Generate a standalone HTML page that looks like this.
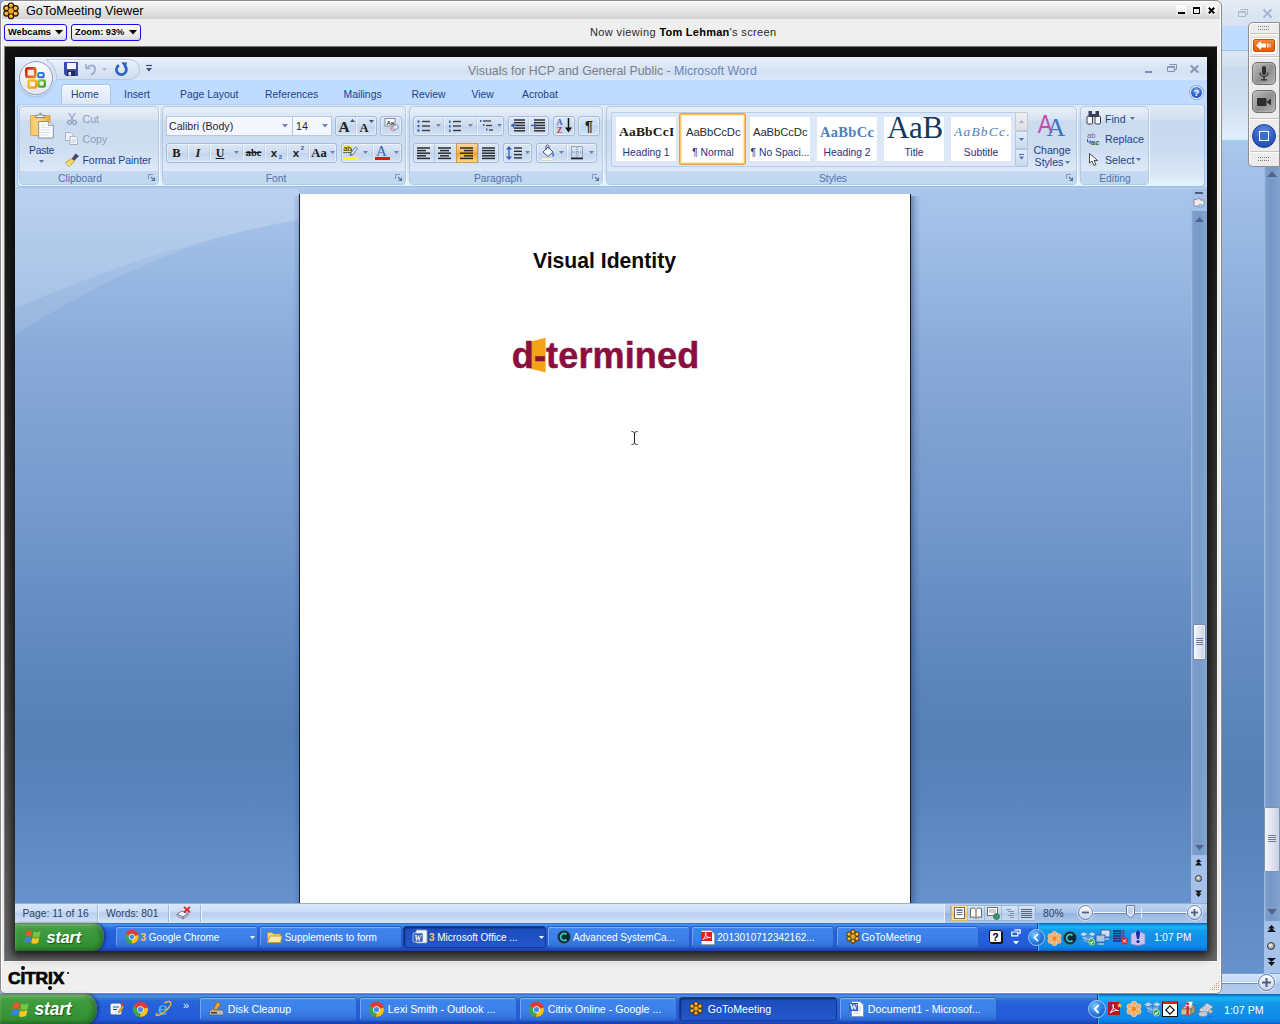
<!DOCTYPE html>
<html lang="en"><head><meta charset="utf-8"><title>GoToMeeting Viewer</title>
<style>
*{box-sizing:border-box;margin:0;padding:0}
html,body{width:1280px;height:1024px;overflow:hidden}
body{position:relative;background:#8eb0dc;font-family:"Liberation Sans",sans-serif;font-size:10.3px;color:#15428b}
div,svg,span.a{position:absolute}
svg{overflow:visible}
.t{white-space:nowrap;overflow:visible}
.sf{font-family:"Liberation Serif",serif}
.dj{font-family:"DejaVu Sans",sans-serif}
</style></head><body>
<div style="left:1200px;top:0px;width:80px;height:26px;background:linear-gradient(#e6edf7,#dbe5f2 60%,#d6e2f1)"></div><div style="left:1200px;top:26px;width:80px;height:25px;background:#bfdbff;border-bottom:1px solid #9fc0ea"></div><div style="left:1200px;top:51px;width:80px;height:90px;background:linear-gradient(#dbe6f4 0,#d0deef 16px,#c8d9ed 17px,#cfdff1 55px,#e1eefb 86px,#d4f6fb 88px,#a9c4e6 90px)"></div><div style="left:1200px;top:141px;width:80px;height:833px;background:linear-gradient(#a9c6ec 0%,#9bbae4 10%,#88a9d8 24%,#7196ca 49%,#6089c0 64%,#5680b6 76%,#5984bc 85%,#6892cc 100%)"></div><div style="left:1264px;top:141px;width:16px;height:780px;background:linear-gradient(90deg,#a9c4ea 0,#7c9dca 2px,#7797c6 8px,#84a4cf 16px)"></div><svg style="left:1267px;top:171px;" width="10" height="6" viewBox="0 0 10 6" preserveAspectRatio="none"><path d="M0 6 L5 0 L10 6Z" fill="#53658a"/></svg><div style="left:1264px;top:807px;width:16px;height:65px;background:linear-gradient(90deg,#f4f6fa,#dfe4ee 50%,#c9d2e3);border:1px solid #7f93b5;border-radius:2px"></div><svg style="left:1268px;top:835px;" width="8" height="8" viewBox="0 0 8 8" preserveAspectRatio="none"><path d="M0 .5H8M0 2.5H8M0 4.5H8M0 6.5H8" stroke="#6d7c96" stroke-width="1"/></svg><svg style="left:1267px;top:909px;" width="10" height="6" viewBox="0 0 10 6" preserveAspectRatio="none"><path d="M0 0 L5 6 L10 0Z" fill="#53658a"/></svg><div style="left:1264px;top:921px;width:16px;height:53px;background:#a5c2ea"></div><svg style="left:1267px;top:925px;" width="9" height="8" viewBox="0 0 9 8" preserveAspectRatio="none"><path d="M4.5 0 L8 3.5H1Z M4.5 3 L9 7H0Z" fill="#111"/></svg><div style="left:1267px;top:942px;width:8px;height:8px;border-radius:50%;background:radial-gradient(circle at 40% 35%,#f4f4f4,#9a9a9a 70%,#444);border:1px solid #333"></div><svg style="left:1267px;top:958px;" width="9" height="8" viewBox="0 0 9 8" preserveAspectRatio="none"><path d="M0 0H9L4.5 4Z M1 4H8L4.5 8Z" fill="#111"/></svg><div style="left:1200px;top:973px;width:80px;height:21px;background:linear-gradient(#d3e3f9 0,#c1d8f6 35%,#a9c6ee 50%,#b6cfee 100%);border-top:1px solid #7d9fd0"></div><div style="left:1222px;top:982px;width:40px;height:1px;background:#f4f8fd"></div><div style="left:1222px;top:983px;width:40px;height:1px;background:#6e8dbd"></div><div style="left:1258px;top:974px;width:17px;height:17px;border-radius:50%;background:linear-gradient(#fdfeff,#c9d6ea);border:1px solid #61799f;box-shadow:0 0 0 1px rgba(255,255,255,.6)"></div><svg style="left:1262px;top:978px;" width="9" height="9" viewBox="0 0 9 9" preserveAspectRatio="none"><path d="M4.5 0V9M0 4.5H9" stroke="#4c5f82" stroke-width="2"/></svg><svg style="left:1238px;top:9px;" width="10" height="8" viewBox="0 0 10 8" preserveAspectRatio="none"><path d="M2.5 .5H9.5V5.5H7.5M.5 2.5H7.5V7.5H.5Z" fill="none" stroke="#a9b9d0" stroke-width="1"/><path d="M.5 3H7.5" stroke="#a9b9d0" stroke-width="1.6"/></svg><svg style="left:1263px;top:9px;" width="9" height="9" viewBox="0 0 9 9" preserveAspectRatio="none"><path d="M.5 .5L8.5 8.5M8.5 .5L.5 8.5" stroke="#a5b6cf" stroke-width="2"/></svg><div style="left:1248px;top:22px;width:32px;height:145px;background:#ececec;border:1px solid #8e8e8e;border-radius:5px 0 0 5px;box-shadow:inset 1px 1px 0 #fafafa"></div><svg style="left:1258px;top:26px;" width="12" height="5" viewBox="0 0 12 5" preserveAspectRatio="none"><rect x="0" y="0" width="1" height="1" fill="#777"/><rect x="0" y="3" width="1" height="1" fill="#777"/><rect x="2" y="0" width="1" height="1" fill="#777"/><rect x="2" y="3" width="1" height="1" fill="#777"/><rect x="4" y="0" width="1" height="1" fill="#777"/><rect x="4" y="3" width="1" height="1" fill="#777"/><rect x="6" y="0" width="1" height="1" fill="#777"/><rect x="6" y="3" width="1" height="1" fill="#777"/><rect x="8" y="0" width="1" height="1" fill="#777"/><rect x="8" y="3" width="1" height="1" fill="#777"/><rect x="10" y="0" width="1" height="1" fill="#777"/><rect x="10" y="3" width="1" height="1" fill="#777"/></svg><svg style="left:1258px;top:157px;" width="12" height="5" viewBox="0 0 12 5" preserveAspectRatio="none"><rect x="0" y="0" width="1" height="1" fill="#777"/><rect x="0" y="3" width="1" height="1" fill="#777"/><rect x="2" y="0" width="1" height="1" fill="#777"/><rect x="2" y="3" width="1" height="1" fill="#777"/><rect x="4" y="0" width="1" height="1" fill="#777"/><rect x="4" y="3" width="1" height="1" fill="#777"/><rect x="6" y="0" width="1" height="1" fill="#777"/><rect x="6" y="3" width="1" height="1" fill="#777"/><rect x="8" y="0" width="1" height="1" fill="#777"/><rect x="8" y="3" width="1" height="1" fill="#777"/><rect x="10" y="0" width="1" height="1" fill="#777"/><rect x="10" y="3" width="1" height="1" fill="#777"/></svg><div style="left:1250px;top:33px;width:29px;height:1px;background:#c4c4c4"></div><div style="left:1250px;top:34px;width:29px;height:1px;background:#fbfbfb"></div><div style="left:1251px;top:37px;width:27px;height:18px;background:#fff;border-radius:3px;border:1px solid #d9d9d9"></div><div style="left:1253px;top:39px;width:22px;height:13px;background:linear-gradient(#f7893a,#ee6a10 50%,#e35e05);border:1px solid #c9510a;border-radius:2px"></div><svg style="left:1256px;top:41px;" width="16" height="9" viewBox="0 0 16 9" preserveAspectRatio="none"><path d="M0 4.5 L5 0 V2.5 H10 V6.5 H5 V9Z" fill="#fff"/><rect x="11" y="2.5" width="1.5" height="4" fill="#fff"/><rect x="13.5" y="2.5" width="1.2" height="4" fill="#ffd9bd"/></svg><div style="left:1250px;top:56px;width:29px;height:1px;background:#c4c4c4"></div><div style="left:1250px;top:57px;width:29px;height:1px;background:#fbfbfb"></div><div style="left:1252px;top:62px;width:24px;height:23px;background:linear-gradient(135deg,#bdbdbd,#8f8f8f 55%,#b2b2b2);border:1px solid #6f6f6f;border-radius:5px;box-shadow:inset 0 0 2px rgba(255,255,255,.6)"></div><svg style="left:1259px;top:66px;" width="10" height="15" viewBox="0 0 10 15" preserveAspectRatio="none"><rect x="3" y="0" width="4" height="9" rx="2" fill="#2e2e2e"/><path d="M1 6.5 a4 4 0 0 0 8 0" fill="none" stroke="#2e2e2e" stroke-width="1.2"/><path d="M5 10.5V13.5M2 13.8H8" stroke="#2e2e2e" stroke-width="1.3"/></svg><div style="left:1252px;top:90px;width:24px;height:23px;background:linear-gradient(135deg,#bdbdbd,#8f8f8f 55%,#b2b2b2);border:1px solid #6f6f6f;border-radius:5px;box-shadow:inset 0 0 2px rgba(255,255,255,.6)"></div><svg style="left:1257px;top:98px;" width="14" height="8" viewBox="0 0 14 8" preserveAspectRatio="none"><rect x="0" y="0" width="9.5" height="8" rx="1" fill="#2e2e2e"/><path d="M9.5 4 L14 .5 V7.5Z" fill="#2e2e2e"/></svg><div style="left:1250px;top:118px;width:29px;height:1px;background:#c4c4c4"></div><div style="left:1250px;top:119px;width:29px;height:1px;background:#fbfbfb"></div><div style="left:1252px;top:124px;width:24px;height:24px;border-radius:50%;background:radial-gradient(circle at 50% 25%,#5d8ae0,#2f5fc4 55%,#1d45a0);border:1px solid #1b3f94"></div><div style="left:1259px;top:131px;width:10px;height:10px;border:1.5px solid #fff;background:#3c6ed0"></div><div style="left:1250px;top:151px;width:29px;height:1px;background:#c4c4c4"></div><div style="left:1250px;top:152px;width:29px;height:1px;background:#fbfbfb"></div><div style="left:0px;top:0px;width:1222px;height:994px;background:#efefef;border:1px solid #8c8c8c;border-radius:5px 6px 6px 5px;box-shadow:inset 1px 1px 0 #fff, inset -1px -1px 0 #fff"></div><div style="left:2px;top:2px;width:1218px;height:17px;background:linear-gradient(#f6f6f6,#e6e6e6 45%,#d4d4d4);border-radius:3px 4px 0 0"></div><div class="t" style="left:26px;top:0.5px;height:20px;line-height:20px;font-size:12.7px;color:#000;">GoToMeeting Viewer</div><svg width="0" height="0" style="left:0;top:0"><defs><radialGradient id="dg" cx="45%" cy="35%" r="70%"><stop offset="0" stop-color="#ffd24a"/><stop offset="1" stop-color="#f08a00"/></radialGradient><radialGradient id="dg2" cx="50%" cy="50%" r="60%"><stop offset="0" stop-color="#ffc58a"/><stop offset="1" stop-color="#f07c12"/></radialGradient></defs></svg><svg style="left:2px;top:2px;" width="18" height="18" viewBox="0 0 18 18" preserveAspectRatio="none"><circle cx="9.00" cy="3.60" r="2.6" fill="url(#dg)" stroke="#1a1200" stroke-width="1.1"/><circle cx="4.41" cy="6.25" r="2.6" fill="url(#dg)" stroke="#1a1200" stroke-width="1.1"/><circle cx="4.41" cy="11.55" r="2.6" fill="url(#dg)" stroke="#1a1200" stroke-width="1.1"/><circle cx="9.00" cy="14.20" r="2.6" fill="url(#dg)" stroke="#1a1200" stroke-width="1.1"/><circle cx="13.59" cy="11.55" r="2.6" fill="url(#dg)" stroke="#1a1200" stroke-width="1.1"/><circle cx="13.59" cy="6.25" r="2.6" fill="url(#dg)" stroke="#1a1200" stroke-width="1.1"/><circle cx="9" cy="8.9" r="2.6" fill="#f9a11c"/></svg><div style="left:1176px;top:5px;width:11px;height:11px;background:linear-gradient(#ffffff,#f1f1f1 60%,#dedede);border-radius:2px;box-shadow:0 0 1px #cfcfcf"></div><div style="left:1178px;top:12px;width:7px;height:2px;background:#000"></div><div style="left:1191px;top:5px;width:11px;height:11px;background:linear-gradient(#ffffff,#f1f1f1 60%,#dedede);border-radius:2px;box-shadow:0 0 1px #cfcfcf"></div><div style="left:1193px;top:7px;width:7px;height:7px;border:1px solid #000;border-top-width:2px;background:#eee"></div><div style="left:1206px;top:5px;width:11px;height:11px;background:linear-gradient(#ffffff,#f1f1f1 60%,#dedede);border-radius:2px;box-shadow:0 0 1px #cfcfcf"></div><svg style="left:1208px;top:7px;" width="7" height="7" viewBox="0 0 7 7" preserveAspectRatio="none"><path d="M.8 .8L6.2 6.2M6.2 .8L.8 6.2" stroke="#000" stroke-width="2"/></svg><div style="left:4px;top:24px;width:63px;height:16.5px;background:linear-gradient(#ffffff,#f4f4f4 45%,#d9d9d9);border:1px solid #1010e8;border-radius:3px"></div><div class="t" style="left:8px;top:21.7px;height:20px;line-height:20px;font-size:9.25px;color:#000;font-weight:bold">Webcams</div><svg style="left:55px;top:30px;" width="8" height="5" viewBox="0 0 8 5" preserveAspectRatio="none"><path d="M0 0H8L4 4.5Z" fill="#000"/></svg><div style="left:71px;top:24px;width:70px;height:16.5px;background:linear-gradient(#ffffff,#f4f4f4 45%,#d9d9d9);border:1px solid #1010e8;border-radius:3px"></div><div class="t" style="left:75px;top:21.7px;height:20px;line-height:20px;font-size:9.25px;color:#000;font-weight:bold">Zoom: 93%</div><svg style="left:129px;top:30px;" width="8" height="5" viewBox="0 0 8 5" preserveAspectRatio="none"><path d="M0 0H8L4 4.5Z" fill="#000"/></svg><div class="t" style="left:590px;top:22.0px;height:20px;line-height:20px;font-size:11px;color:#2a2a2a;letter-spacing:.38px">Now viewing <span style="color:#000;font-weight:bold;letter-spacing:.25px">Tom Lehman</span>'s screen</div><div style="left:4px;top:46px;width:1214px;height:916px;background:linear-gradient(#131313,#1b1b1b 20%,#444 70%,#696969 100%);border-top:1px solid #7a7a7a;border-left:1px solid #858585;border-right:1px solid #fff;border-bottom:1px solid #fff"></div><div style="left:15px;top:57px;width:1192px;height:894px;background:#5a84bb;box-shadow:0 2px 9px 3px rgba(0,0,0,.75)"></div><div class="t" style="left:8px;top:965.6px;height:24px;line-height:24px;font-size:17.4px;color:#000;font-weight:bold;letter-spacing:-.15px;-webkit-text-stroke:.7px #000">CITRIX</div><div style="left:21px;top:966px;width:4px;height:4px;background:#000;border-radius:50%"></div><div style="left:47.5px;top:985.5px;width:4px;height:4px;background:#000;border-radius:50%"></div><div style="left:67px;top:972px;width:2px;height:2px;background:#000;border-radius:50%"></div><svg style="left:1208px;top:979px;" width="12" height="12" viewBox="0 0 12 12" preserveAspectRatio="none"><rect x="10" y="2" width="1" height="1" fill="#c8a468"/><rect x="10" y="4" width="1" height="1" fill="#c8a468"/><rect x="8" y="4" width="1" height="1" fill="#c8a468"/><rect x="10" y="6" width="1" height="1" fill="#c8a468"/><rect x="8" y="6" width="1" height="1" fill="#c8a468"/><rect x="6" y="6" width="1" height="1" fill="#c8a468"/><rect x="10" y="8" width="1" height="1" fill="#c8a468"/><rect x="8" y="8" width="1" height="1" fill="#c8a468"/><rect x="6" y="8" width="1" height="1" fill="#c8a468"/><rect x="4" y="8" width="1" height="1" fill="#c8a468"/><rect x="10" y="10" width="1" height="1" fill="#c8a468"/><rect x="8" y="10" width="1" height="1" fill="#c8a468"/><rect x="6" y="10" width="1" height="1" fill="#c8a468"/><rect x="4" y="10" width="1" height="1" fill="#c8a468"/><rect x="2" y="10" width="1" height="1" fill="#c8a468"/></svg><div style="left:15px;top:57px;width:1192px;height:23px;background:linear-gradient(#e9f0fa 0,#dfe9f6 30%,#d3e1f4 65%,#dbe8f8 100%)"></div><div style="left:15px;top:80px;width:1192px;height:25px;background:#bfdbff"></div><svg style="left:40px;top:57px;" width="104" height="26" viewBox="0 0 104 26" preserveAspectRatio="none"><defs><linearGradient id="qg" x1="0" y1="0" x2="0" y2="1"><stop offset="0" stop-color="#e9f0fa"/><stop offset="1" stop-color="#cfddf0"/></linearGradient></defs><path d="M6.100 2.500H89.500A10 10 0 0 1 89.500 22.500H16.700A21 21 0 0 0 6.100 2.500Z" fill="url(#qg)" stroke="#b5c8e4" stroke-width="1"/><path d="M8 3.500H89" stroke="#f6f9fd" stroke-width="1"/></svg><div style="left:18.5px;top:60.5px;width:34.5px;height:34.5px;border-radius:50%;background:radial-gradient(circle at 50% 35%,#ffffff 0,#f4f6fa 40%,#dfe4ee 75%,#c3cbdb 100%);border:1px solid #939fb8;box-shadow:0 0 0 1px rgba(255,255,255,.55),0 1px 3px rgba(70,90,130,.5), inset 0 0 3px #fff"></div><svg style="left:24px;top:66px;" width="24" height="24" viewBox="0 0 24 24" preserveAspectRatio="none"><defs><linearGradient id="o1" x1="0" y1="0" x2="1" y2="1"><stop offset="0" stop-color="#c8201a"/><stop offset="1" stop-color="#ee8a22"/></linearGradient><linearGradient id="o2" x1="0" y1="0" x2="1" y2="1"><stop offset="0" stop-color="#2a8fd8"/><stop offset="1" stop-color="#3c5cc0"/></linearGradient><linearGradient id="o3" x1="0" y1="0" x2="1" y2="1"><stop offset="0" stop-color="#f6c62a"/><stop offset="1" stop-color="#f09a18"/></linearGradient><linearGradient id="o4" x1="0" y1="0" x2="1" y2="1"><stop offset="0" stop-color="#8cc63e"/><stop offset="1" stop-color="#3f9a2e"/></linearGradient></defs><rect x="2.300" y="2.300" width="9" height="8.600" rx="1.500" fill="#f6ece6" stroke="url(#o1)" stroke-width="2.700"/><rect x="14.200" y="7" width="5.500" height="4.300" rx="1" fill="#dbeaf8" stroke="url(#o2)" stroke-width="2"/><rect x="4.500" y="14.600" width="7.600" height="7" rx="1.300" fill="#fbf6e0" stroke="url(#o3)" stroke-width="2.500"/><rect x="14.500" y="14.300" width="6.300" height="6.300" rx="1.200" fill="#e9f4dc" stroke="url(#o4)" stroke-width="2.300"/></svg><svg style="left:64px;top:62px;" width="14" height="14" viewBox="0 0 14 14" preserveAspectRatio="none"><path d="M0 0H14V14H2L0 12Z" fill="#3c4aa8"/><rect x="3" y="1" width="9" height="6" fill="#f2f4fb"/><rect x="3" y="9" width="8" height="5" fill="#20285e"/><rect x="4.5" y="10" width="2.5" height="3.5" fill="#e8ebf7"/></svg><svg style="left:85px;top:63px;" width="12" height="12" viewBox="0 0 12 12" preserveAspectRatio="none"><path d="M1 1V5.5H5.5" fill="none" stroke="#9fb1d0" stroke-width="1.6"/><path d="M2 5 C5 1,10 2,10 6 C10 9,8 11,6 11.5" fill="none" stroke="#9fb1d0" stroke-width="2"/></svg><svg style="left:102px;top:68px;" width="5" height="3" viewBox="0 0 5 3" preserveAspectRatio="none"><path d="M0 0H5L2.5 3Z" fill="#a9badb"/></svg><svg style="left:115px;top:62px;" width="13" height="14" viewBox="0 0 13 14" preserveAspectRatio="none"><path d="M4 3.2 A5 5 0 1 0 9.4 3.6" fill="none" stroke="#2f62c2" stroke-width="2.7"/><path d="M6.2 .2 L12.2 .6 L10.6 6.2Z" fill="#2f62c2"/></svg><svg style="left:146px;top:65px;" width="6" height="8" viewBox="0 0 6 8" preserveAspectRatio="none"><path d="M0 .5H6" stroke="#3c4f77" stroke-width="1.2"/><path d="M0 3H6L3 6.5Z" fill="#3c4f77"/></svg><div class="t" style="left:468px;top:60.8px;height:20px;line-height:20px;font-size:12.35px;color:#7c7f86;">Visuals for HCP and General Public - <span style="color:#6b86ba">Microsoft Word</span></div><div style="left:1145px;top:71px;width:7px;height:2px;background:#7f8fae"></div><svg style="left:1167px;top:64px;" width="10" height="8" viewBox="0 0 10 8" preserveAspectRatio="none"><path d="M2.5 .5H9.5V5.5H7.5M.5 2.5H7.5V7.5H.5Z" fill="none" stroke="#8392b0" stroke-width="1"/><path d="M.5 3H7.5" stroke="#8392b0" stroke-width="1.6"/></svg><svg style="left:1190px;top:65px;" width="9" height="8" viewBox="0 0 9 8" preserveAspectRatio="none"><path d="M.7 .5L8.3 7.5M8.3 .5L.7 7.5" stroke="#8795b3" stroke-width="2"/></svg><div style="left:1190px;top:86px;width:13px;height:13px;border-radius:50%;background:radial-gradient(circle at 50% 30%,#7aa7ef,#2b5fcc 60%,#1c48ad);border:1px solid #eef4fe;box-shadow:0 0 0 1px #8fa9d6"></div><div class="t" style="left:1046.5px;width:300px;text-align:center;top:82.8px;height:20px;line-height:20px;font-size:9.5px;color:#fff;font-weight:bold">?</div><div style="left:61px;top:84px;width:50px;height:22px;background:linear-gradient(#f2f7fe,#e3ecf8 60%,#dbe6f4);border:1px solid #a9c3e6;border-bottom:none;border-radius:4px 4px 0 0;box-shadow:inset 0 1px 0 #fff"></div><div class="t" style="left:71px;top:84.5px;height:20px;line-height:20px;font-size:10.4px;color:#21438a;">Home</div><div class="t" style="left:124px;top:84.5px;height:20px;line-height:20px;font-size:10.4px;color:#21438a;">Insert</div><div class="t" style="left:180px;top:84.5px;height:20px;line-height:20px;font-size:10.4px;color:#21438a;">Page Layout</div><div class="t" style="left:265px;top:84.5px;height:20px;line-height:20px;font-size:10.4px;color:#21438a;">References</div><div class="t" style="left:343.5px;top:84.5px;height:20px;line-height:20px;font-size:10.4px;color:#21438a;">Mailings</div><div class="t" style="left:411.5px;top:84.5px;height:20px;line-height:20px;font-size:10.4px;color:#21438a;">Review</div><div class="t" style="left:471.5px;top:84.5px;height:20px;line-height:20px;font-size:10.4px;color:#21438a;">View</div><div class="t" style="left:522px;top:84.5px;height:20px;line-height:20px;font-size:10.4px;color:#21438a;">Acrobat</div><div style="left:15px;top:105px;width:1192px;height:84px;background:#bfdbff"></div><div style="left:17px;top:104px;width:1188px;height:83px;background:linear-gradient(#dfe9f6 0,#d3e0f1 14px,#c8d9ee 15px,#cbdbf0 45px,#dbe8f7 70px,#e6f1fc 78px,#d8f8fd 80px);border:1px solid #9dbde6;border-radius:4px;border-top-color:#b4cdee"></div><div style="left:15px;top:187px;width:1192px;height:2px;background:linear-gradient(#a9c3e4,#bcd2ee)"></div><div style="left:19px;top:106px;width:140px;height:79px;border:1px solid #b3c8e3;border-radius:4px;background:linear-gradient(rgba(255,255,255,.28),rgba(255,255,255,.12) 14px,rgba(255,255,255,.05) 15px,rgba(255,255,255,.10) 63px);box-shadow:1px 0 0 rgba(255,255,255,.7)"></div><div style="left:20px;top:171px;width:138px;height:13px;background:linear-gradient(#c3daf2,#c2d8f0);border-radius:0 0 3px 3px"></div><div class="t" style="left:-70px;width:300px;text-align:center;top:168.6px;height:20px;line-height:20px;font-size:10.3px;color:#5273ad;">Clipboard</div><svg style="left:148px;top:174px;" width="7" height="7" viewBox="0 0 7 7" preserveAspectRatio="none"><path d="M.5 5V.5H5" fill="none" stroke="#7f95b8" stroke-width="1"/><path d="M3 3L6.5 6.5M6.5 3.5V6.5H3.5" fill="none" stroke="#5470a0" stroke-width="1.1"/></svg><div style="left:162px;top:106px;width:244px;height:79px;border:1px solid #b3c8e3;border-radius:4px;background:linear-gradient(rgba(255,255,255,.28),rgba(255,255,255,.12) 14px,rgba(255,255,255,.05) 15px,rgba(255,255,255,.10) 63px);box-shadow:1px 0 0 rgba(255,255,255,.7)"></div><div style="left:163px;top:171px;width:242px;height:13px;background:linear-gradient(#c3daf2,#c2d8f0);border-radius:0 0 3px 3px"></div><div class="t" style="left:126px;width:300px;text-align:center;top:168.6px;height:20px;line-height:20px;font-size:10.3px;color:#5273ad;">Font</div><svg style="left:395px;top:174px;" width="7" height="7" viewBox="0 0 7 7" preserveAspectRatio="none"><path d="M.5 5V.5H5" fill="none" stroke="#7f95b8" stroke-width="1"/><path d="M3 3L6.5 6.5M6.5 3.5V6.5H3.5" fill="none" stroke="#5470a0" stroke-width="1.1"/></svg><div style="left:409px;top:106px;width:194px;height:79px;border:1px solid #b3c8e3;border-radius:4px;background:linear-gradient(rgba(255,255,255,.28),rgba(255,255,255,.12) 14px,rgba(255,255,255,.05) 15px,rgba(255,255,255,.10) 63px);box-shadow:1px 0 0 rgba(255,255,255,.7)"></div><div style="left:410px;top:171px;width:192px;height:13px;background:linear-gradient(#c3daf2,#c2d8f0);border-radius:0 0 3px 3px"></div><div class="t" style="left:348px;width:300px;text-align:center;top:168.6px;height:20px;line-height:20px;font-size:10.3px;color:#5273ad;">Paragraph</div><svg style="left:592px;top:174px;" width="7" height="7" viewBox="0 0 7 7" preserveAspectRatio="none"><path d="M.5 5V.5H5" fill="none" stroke="#7f95b8" stroke-width="1"/><path d="M3 3L6.5 6.5M6.5 3.5V6.5H3.5" fill="none" stroke="#5470a0" stroke-width="1.1"/></svg><div style="left:606px;top:106px;width:471px;height:79px;border:1px solid #b3c8e3;border-radius:4px;background:linear-gradient(rgba(255,255,255,.28),rgba(255,255,255,.12) 14px,rgba(255,255,255,.05) 15px,rgba(255,255,255,.10) 63px);box-shadow:1px 0 0 rgba(255,255,255,.7)"></div><div style="left:607px;top:171px;width:469px;height:13px;background:linear-gradient(#c3daf2,#c2d8f0);border-radius:0 0 3px 3px"></div><div class="t" style="left:683px;width:300px;text-align:center;top:168.6px;height:20px;line-height:20px;font-size:10.3px;color:#5273ad;">Styles</div><svg style="left:1066px;top:174px;" width="7" height="7" viewBox="0 0 7 7" preserveAspectRatio="none"><path d="M.5 5V.5H5" fill="none" stroke="#7f95b8" stroke-width="1"/><path d="M3 3L6.5 6.5M6.5 3.5V6.5H3.5" fill="none" stroke="#5470a0" stroke-width="1.1"/></svg><div style="left:1080px;top:106px;width:69px;height:79px;border:1px solid #b3c8e3;border-radius:4px;background:linear-gradient(rgba(255,255,255,.28),rgba(255,255,255,.12) 14px,rgba(255,255,255,.05) 15px,rgba(255,255,255,.10) 63px);box-shadow:1px 0 0 rgba(255,255,255,.7)"></div><div style="left:1081px;top:171px;width:67px;height:13px;background:linear-gradient(#c3daf2,#c2d8f0);border-radius:0 0 3px 3px"></div><div class="t" style="left:965px;width:300px;text-align:center;top:168.6px;height:20px;line-height:20px;font-size:10.3px;color:#5273ad;">Editing</div><svg style="left:30px;top:111px;" width="26" height="28" viewBox="0 0 24 28" preserveAspectRatio="none"><defs><linearGradient id="pg" x1="0" x2="1"><stop offset="0" stop-color="#f9c866"/><stop offset=".45" stop-color="#fbd27f"/><stop offset="1" stop-color="#f0a93a"/></linearGradient></defs><rect x=".5" y="4.500" width="18" height="20" rx=".8" fill="url(#pg)" stroke="#d39a3a" stroke-width=".8"/><path d="M5 6.500V4.500H7.500C7.500 1.500 11.500 1.500 11.500 4.500H14V6.500Z" fill="#eef0f3" stroke="#6f7683" stroke-width=".8"/><circle cx="9.500" cy="3.800" r=".9" fill="#8b919c"/><path d="M8 10.500H17L21.500 14.500V27H8Z" fill="#fdfdfe" stroke="#7e8aa0" stroke-width=".9"/><path d="M17 10.500V14.500H21.500" fill="#dfe5ee" stroke="#7e8aa0" stroke-width=".7"/><path d="M10 14H15M10 16.500H19M10 19H19M10 21.500H19M10 24H16" stroke="#d8dde6" stroke-width=".9"/></svg><div class="t" style="left:-108.5px;width:300px;text-align:center;top:141.0px;height:20px;line-height:20px;font-size:10.3px;color:#21438a;letter-spacing:-.3px">Paste</div><svg style="left:38.5px;top:160px;" width="5" height="3" viewBox="0 0 5 3" preserveAspectRatio="none"><path d="M0 0H5L2.5 3Z" fill="#5a76a8"/></svg><svg style="left:67px;top:113px;" width="10" height="12" viewBox="0 0 10 12" preserveAspectRatio="none"><path d="M2 0L6.5 8M8 0L3.5 8" stroke="#9aa9c3" stroke-width="1.3"/><circle cx="2.4" cy="9.6" r="1.9" fill="none" stroke="#8fa0bf" stroke-width="1.2"/><circle cx="7.6" cy="9.6" r="1.9" fill="none" stroke="#8fa0bf" stroke-width="1.2"/></svg><div class="t" style="left:82.5px;top:108.5px;height:20px;line-height:20px;font-size:10.6px;color:#8e9db6;">Cut</div><svg style="left:65px;top:132px;" width="13" height="13" viewBox="0 0 13 13" preserveAspectRatio="none"><path d="M.5 .5H6L8 2.5V8.500H.5Z" fill="#eef1f6" stroke="#a7b3c9"/><path d="M5 4.5H10.500L12.5 6.5V12.5H5Z" fill="#f5f7fa" stroke="#a7b3c9"/><path d="M6.5 8H11M6.500 10H11" stroke="#c0c9d9"/></svg><div class="t" style="left:82.5px;top:129.0px;height:20px;line-height:20px;font-size:10.6px;color:#8e9db6;">Copy</div><svg style="left:65px;top:153px;" width="15" height="14" viewBox="0 0 15 14" preserveAspectRatio="none"><path d="M10.500 0.500L14 3L9 8L6.500 6Z" fill="#4a4370"/><path d="M6.5 5.500L9.500 8.500L4 13.500L0.500 9.500Z" fill="#f2d667" stroke="#b59a2e" stroke-width=".8"/><path d="M2 10L5 12.500" stroke="#fff6c0" stroke-width="1"/></svg><div class="t" style="left:82.5px;top:149.5px;height:20px;line-height:20px;font-size:10.5px;color:#21438a;letter-spacing:-.05px">Format Painter</div><div style="left:166px;top:116px;width:126px;height:20px;background:#f4f8fe;border:1px solid #b5c9e6;border-right:none"></div><div style="left:292px;top:116px;width:40px;height:20px;background:#f4f8fe;border:1px solid #b5c9e6"></div><div class="t" style="left:169px;top:116.0px;height:20px;line-height:20px;font-size:10.6px;color:#1c2433;">Calibri (Body)</div><svg style="left:282px;top:124px;" width="6" height="4" viewBox="0 0 6 4" preserveAspectRatio="none"><path d="M0 0H6L3 3.500Z" fill="#6f84ab"/></svg><div class="t" style="left:296px;top:116.0px;height:20px;line-height:20px;font-size:10.6px;color:#1c2433;">14</div><svg style="left:322px;top:124px;" width="6" height="4" viewBox="0 0 6 4" preserveAspectRatio="none"><path d="M0 0H6L3 3.500Z" fill="#6f84ab"/></svg><div style="left:335px;top:116px;width:42px;height:20px;background:linear-gradient(#dbe7f6,#cbdbf0 50%,#c3d5ed 51%,#d3e1f4);border:1px solid #a3bbdc;border-radius:3px;box-shadow:inset 0 0 0 1px rgba(255,255,255,.45)"></div><div style="left:355px;top:117px;width:1px;height:18px;background:linear-gradient(#d0ddef,#b7c9e3 50%,#d0ddef)"></div><div style="left:356px;top:117px;width:1px;height:18px;background:rgba(255,255,255,.5)"></div><div class="t" style="left:194px;width:300px;text-align:center;top:117.0px;height:20px;line-height:20px;font-size:15.5px;color:#222;font-weight:bold;font-family:'Liberation Serif',serif">A</div><svg style="left:350px;top:119px;" width="5" height="3" viewBox="0 0 5 3" preserveAspectRatio="none"><path d="M0 3H5L2.5 0Z" fill="#42516e"/></svg><div class="t" style="left:214px;width:300px;text-align:center;top:118.0px;height:20px;line-height:20px;font-size:12.5px;color:#222;font-weight:bold;font-family:'Liberation Serif',serif">A</div><svg style="left:369px;top:120px;" width="5" height="3" viewBox="0 0 5 3" preserveAspectRatio="none"><path d="M0 0H5L2.5 3Z" fill="#42516e"/></svg><div style="left:380px;top:116px;width:22px;height:20px;background:linear-gradient(#dbe7f6,#cbdbf0 50%,#c3d5ed 51%,#d3e1f4);border:1px solid #a3bbdc;border-radius:3px;box-shadow:inset 0 0 0 1px rgba(255,255,255,.45)"></div><svg style="left:384px;top:118px;" width="15" height="15" viewBox="0 0 15 15" preserveAspectRatio="none"><rect x="1" y=".5" width="10" height="7.500" fill="#fbfcfe" stroke="#7f8aa0"/><text x="2.500" y="6.500" font-size="6" font-family="Liberation Sans" font-weight="bold" fill="#333">Aa</text><path d="M8 9L12 6.500L14.500 9.500L10.500 12.500Z" fill="#e8ecf4" stroke="#77839b" stroke-width=".9"/><path d="M6.500 10L8.500 8.500L10.500 11.500L8.500 13Z" fill="#f3b8c0" stroke="#9a7f88" stroke-width=".7"/></svg><div style="left:166px;top:143px;width:171px;height:20px;background:linear-gradient(#dbe7f6,#cbdbf0 50%,#c3d5ed 51%,#d3e1f4);border:1px solid #a3bbdc;border-radius:3px;box-shadow:inset 0 0 0 1px rgba(255,255,255,.45)"></div><div style="left:187px;top:144px;width:1px;height:18px;background:linear-gradient(#d0ddef,#b7c9e3 50%,#d0ddef)"></div><div style="left:188px;top:144px;width:1px;height:18px;background:rgba(255,255,255,.5)"></div><div style="left:209px;top:144px;width:1px;height:18px;background:linear-gradient(#d0ddef,#b7c9e3 50%,#d0ddef)"></div><div style="left:210px;top:144px;width:1px;height:18px;background:rgba(255,255,255,.5)"></div><div style="left:242px;top:144px;width:1px;height:18px;background:linear-gradient(#d0ddef,#b7c9e3 50%,#d0ddef)"></div><div style="left:243px;top:144px;width:1px;height:18px;background:rgba(255,255,255,.5)"></div><div style="left:264px;top:144px;width:1px;height:18px;background:linear-gradient(#d0ddef,#b7c9e3 50%,#d0ddef)"></div><div style="left:265px;top:144px;width:1px;height:18px;background:rgba(255,255,255,.5)"></div><div style="left:286px;top:144px;width:1px;height:18px;background:linear-gradient(#d0ddef,#b7c9e3 50%,#d0ddef)"></div><div style="left:287px;top:144px;width:1px;height:18px;background:rgba(255,255,255,.5)"></div><div style="left:308px;top:144px;width:1px;height:18px;background:linear-gradient(#d0ddef,#b7c9e3 50%,#d0ddef)"></div><div style="left:309px;top:144px;width:1px;height:18px;background:rgba(255,255,255,.5)"></div><div class="t" style="left:26.5px;width:300px;text-align:center;top:143.0px;height:20px;line-height:20px;font-size:12.5px;color:#1a1a1a;font-weight:bold;font-family:'Liberation Serif',serif">B</div><div class="t" style="left:48px;width:300px;text-align:center;top:143.0px;height:20px;line-height:20px;font-size:12.5px;color:#1a1a1a;font-weight:bold;font-style:italic;font-family:'Liberation Serif',serif">I</div><div class="t" style="left:70px;width:300px;text-align:center;top:142.5px;height:20px;line-height:20px;font-size:12px;color:#1a1a1a;font-weight:bold;text-decoration:underline;font-family:'Liberation Serif',serif">U</div><svg style="left:234px;top:151px;" width="5" height="3" viewBox="0 0 5 3" preserveAspectRatio="none"><path d="M0 0H5L2.5 3Z" fill="#6f84ab"/></svg><div class="t" style="left:103.5px;width:300px;text-align:center;top:143.0px;height:20px;line-height:20px;font-size:10.5px;color:#1a1a1a;text-decoration:line-through;font-weight:bold;font-family:'Liberation Serif',serif">abc</div><div class="t" style="left:124px;width:300px;text-align:center;top:142.5px;height:20px;line-height:20px;font-size:11.5px;color:#1a1a1a;font-family:'Liberation Sans',sans-serif"><b>x</b></div><div class="t" style="left:130.5px;width:300px;text-align:center;top:147.0px;height:20px;line-height:20px;font-size:6px;color:#3a5fb0;font-weight:bold">2</div><div class="t" style="left:146px;width:300px;text-align:center;top:142.5px;height:20px;line-height:20px;font-size:11.5px;color:#1a1a1a;"><b>x</b></div><div class="t" style="left:152.5px;width:300px;text-align:center;top:138.0px;height:20px;line-height:20px;font-size:6px;color:#3a5fb0;font-weight:bold">2</div><div class="t" style="left:169px;width:300px;text-align:center;top:143.0px;height:20px;line-height:20px;font-size:12.5px;color:#1a1a1a;font-weight:bold;font-family:'Liberation Serif',serif">Aa</div><svg style="left:329.5px;top:151px;" width="5" height="3" viewBox="0 0 5 3" preserveAspectRatio="none"><path d="M0 0H5L2.5 3Z" fill="#6f84ab"/></svg><div style="left:341px;top:143px;width:61px;height:20px;background:linear-gradient(#dbe7f6,#cbdbf0 50%,#c3d5ed 51%,#d3e1f4);border:1px solid #a3bbdc;border-radius:3px;box-shadow:inset 0 0 0 1px rgba(255,255,255,.45)"></div><div style="left:372px;top:144px;width:1px;height:18px;background:linear-gradient(#d0ddef,#b7c9e3 50%,#d0ddef)"></div><div style="left:373px;top:144px;width:1px;height:18px;background:rgba(255,255,255,.5)"></div><div class="t" style="left:197.5px;width:300px;text-align:center;top:140.0px;height:20px;line-height:20px;font-size:8.5px;color:#222;background:none">ab</div><div style="left:344px;top:146px;width:8px;height:6px;background:#f7e93c;opacity:.0"></div><svg style="left:343px;top:145px;" width="16" height="15" viewBox="0 0 16 15" preserveAspectRatio="none"><rect x="0" y="0" width="8" height="7" fill="#f6ea54"/><text x=".2" y="6.300" font-size="7.500" font-family="Liberation Sans" fill="#222">ab</text><path d="M7.500 8.500L12.500 2L14.500 3.500L9.500 10Z" fill="#e9edf5" stroke="#5b6681" stroke-width=".9"/><path d="M6.500 11L7.500 8.500L9.500 10Z" fill="#555"/><rect x="1" y="12" width="14" height="3" fill="#ffff00"/></svg><svg style="left:363px;top:151px;" width="5" height="3" viewBox="0 0 5 3" preserveAspectRatio="none"><path d="M0 0H5L2.5 3Z" fill="#6f84ab"/></svg><div class="t" style="left:231.5px;width:300px;text-align:center;top:140.5px;height:20px;line-height:20px;font-size:15px;color:#3b5fb4;font-family:'Liberation Serif',serif">A</div><div style="left:374.5px;top:157px;width:15px;height:3px;background:#ee1111"></div><svg style="left:394px;top:151px;" width="5" height="3" viewBox="0 0 5 3" preserveAspectRatio="none"><path d="M0 0H5L2.5 3Z" fill="#6f84ab"/></svg><div style="left:413px;top:116px;width:91px;height:20px;background:linear-gradient(#dbe7f6,#cbdbf0 50%,#c3d5ed 51%,#d3e1f4);border:1px solid #a3bbdc;border-radius:3px;box-shadow:inset 0 0 0 1px rgba(255,255,255,.45)"></div><div style="left:443px;top:117px;width:1px;height:18px;background:linear-gradient(#d0ddef,#b7c9e3 50%,#d0ddef)"></div><div style="left:444px;top:117px;width:1px;height:18px;background:rgba(255,255,255,.5)"></div><div style="left:476px;top:117px;width:1px;height:18px;background:linear-gradient(#d0ddef,#b7c9e3 50%,#d0ddef)"></div><div style="left:477px;top:117px;width:1px;height:18px;background:rgba(255,255,255,.5)"></div><svg style="left:417px;top:120px;" width="14" height="12" viewBox="0 0 14 12" preserveAspectRatio="none"><circle cx="1.500" cy="1.5" r="1.200" fill="#3a5fb0"/><circle cx="1.500" cy="6.0" r="1.200" fill="#3a5fb0"/><circle cx="1.500" cy="10.5" r="1.200" fill="#3a5fb0"/><path d="M5 1.5H13" stroke="#3d3d3d" stroke-width="1.4"/><path d="M5 6.0H13" stroke="#3d3d3d" stroke-width="1.4"/><path d="M5 10.5H13" stroke="#3d3d3d" stroke-width="1.4"/></svg><svg style="left:435.5px;top:124px;" width="5" height="3" viewBox="0 0 5 3" preserveAspectRatio="none"><path d="M0 0H5L2.5 3Z" fill="#6f84ab"/></svg><svg style="left:448px;top:120px;" width="14" height="12" viewBox="0 0 14 12" preserveAspectRatio="none"><rect x="1" y="0.5" width="1.500" height="2.500" fill="#3a5fb0"/><rect x="1" y="5.0" width="1.500" height="2.500" fill="#3a5fb0"/><rect x="1" y="9.5" width="1.500" height="2.500" fill="#3a5fb0"/><path d="M5 1.5H13" stroke="#3d3d3d" stroke-width="1.4"/><path d="M5 6.0H13" stroke="#3d3d3d" stroke-width="1.4"/><path d="M5 10.5H13" stroke="#3d3d3d" stroke-width="1.4"/></svg><svg style="left:468px;top:124px;" width="5" height="3" viewBox="0 0 5 3" preserveAspectRatio="none"><path d="M0 0H5L2.5 3Z" fill="#6f84ab"/></svg><svg style="left:479.5px;top:119px;" width="16" height="13" viewBox="0 0 16 13" preserveAspectRatio="none"><rect x="0" y="1" width="1.500" height="2" fill="#3a5fb0"/><path d="M3 2H11" stroke="#3d3d3d" stroke-width="1.300"/><rect x="3" y="5" width="1.500" height="2" fill="#3a5fb0"/><path d="M6 6.500H12" stroke="#3d3d3d" stroke-width="1.300"/><rect x="6" y="9.500" width="1.500" height="2" fill="#3a5fb0"/><path d="M9 11H13" stroke="#3d3d3d" stroke-width="1.300"/></svg><svg style="left:496.5px;top:124px;" width="5" height="3" viewBox="0 0 5 3" preserveAspectRatio="none"><path d="M0 0H5L2.5 3Z" fill="#6f84ab"/></svg><div style="left:508px;top:116px;width:41px;height:20px;background:linear-gradient(#dbe7f6,#cbdbf0 50%,#c3d5ed 51%,#d3e1f4);border:1px solid #a3bbdc;border-radius:3px;box-shadow:inset 0 0 0 1px rgba(255,255,255,.45)"></div><div style="left:528px;top:117px;width:1px;height:18px;background:linear-gradient(#d0ddef,#b7c9e3 50%,#d0ddef)"></div><div style="left:529px;top:117px;width:1px;height:18px;background:rgba(255,255,255,.5)"></div><svg style="left:511px;top:119px;" width="15" height="13" viewBox="0 0 15 13" preserveAspectRatio="none"><path d="M3 1.0H14" stroke="#2e2e2e" stroke-width="1.5"/><path d="M3 3.7H14" stroke="#2e2e2e" stroke-width="1.5"/><path d="M3 6.4H14" stroke="#2e2e2e" stroke-width="1.5"/><path d="M3 9.100000000000001H14" stroke="#2e2e2e" stroke-width="1.5"/><path d="M3 11.8H14" stroke="#2e2e2e" stroke-width="1.5"/><path d="M5.500 6.400L0 6.400" stroke="#3a5fb0" stroke-width="1.3"/><path d="M0 6.400L3 4V8.800Z" fill="#3a5fb0"/></svg><svg style="left:531px;top:119px;" width="15" height="13" viewBox="0 0 15 13" preserveAspectRatio="none"><path d="M3 1.0H14" stroke="#2e2e2e" stroke-width="1.5"/><path d="M3 3.7H14" stroke="#2e2e2e" stroke-width="1.5"/><path d="M3 6.4H14" stroke="#2e2e2e" stroke-width="1.5"/><path d="M3 9.100000000000001H14" stroke="#2e2e2e" stroke-width="1.5"/><path d="M3 11.8H14" stroke="#2e2e2e" stroke-width="1.5"/><path d="M0 6.400H5" stroke="#3a5fb0" stroke-width="1.3"/><path d="M6 6.400L3 4V8.800Z" fill="#3a5fb0"/></svg><div style="left:553px;top:116px;width:22px;height:20px;background:linear-gradient(#dbe7f6,#cbdbf0 50%,#c3d5ed 51%,#d3e1f4);border:1px solid #a3bbdc;border-radius:3px;box-shadow:inset 0 0 0 1px rgba(255,255,255,.45)"></div><div class="t" style="left:409.5px;width:300px;text-align:center;top:112.0px;height:20px;line-height:20px;font-size:8.5px;color:#3a5fb0;font-weight:bold;font-family:'Liberation Serif',serif">A</div><div class="t" style="left:409.5px;width:300px;text-align:center;top:120.0px;height:20px;line-height:20px;font-size:8.5px;color:#c0392b;font-weight:bold;font-family:'Liberation Serif',serif">Z</div><svg style="left:565px;top:118px;" width="7" height="15" viewBox="0 0 7 15" preserveAspectRatio="none"><path d="M3.500 0V12" stroke="#111" stroke-width="1.500"/><path d="M0 9.500H7L3.500 14.500Z" fill="#111"/></svg><div style="left:578px;top:116px;width:22px;height:20px;background:linear-gradient(#dbe7f6,#cbdbf0 50%,#c3d5ed 51%,#d3e1f4);border:1px solid #a3bbdc;border-radius:3px;box-shadow:inset 0 0 0 1px rgba(255,255,255,.45)"></div><div class="t" style="left:439px;width:300px;text-align:center;top:115.5px;height:20px;line-height:20px;font-size:14px;color:#222;font-weight:bold">¶</div><div style="left:413px;top:143px;width:86px;height:20px;background:linear-gradient(#dbe7f6,#cbdbf0 50%,#c3d5ed 51%,#d3e1f4);border:1px solid #a3bbdc;border-radius:3px;box-shadow:inset 0 0 0 1px rgba(255,255,255,.45)"></div><div style="left:456px;top:143px;width:22px;height:20px;background:linear-gradient(#fbd9a0,#f7b458 45%,#f5a12e 50%,#fbd77f);border:1px solid #c99b52"></div><div style="left:434px;top:144px;width:1px;height:18px;background:#b4c8e4"></div><div style="left:478px;top:144px;width:1px;height:18px;background:#b4c8e4"></div><svg style="left:417px;top:147px;" width="14" height="12" viewBox="0 0 14 12" preserveAspectRatio="none"><path d="M0 1.0H13" stroke="#2b2b2b" stroke-width="1.500"/><path d="M0 3.6H9" stroke="#2b2b2b" stroke-width="1.500"/><path d="M0 6.2H13" stroke="#2b2b2b" stroke-width="1.500"/><path d="M0 8.8H9" stroke="#2b2b2b" stroke-width="1.500"/><path d="M0 11.4H13" stroke="#2b2b2b" stroke-width="1.500"/></svg><svg style="left:438px;top:147px;" width="14" height="12" viewBox="0 0 14 12" preserveAspectRatio="none"><path d="M0 1.0H13" stroke="#2b2b2b" stroke-width="1.500"/><path d="M2 3.6H11" stroke="#2b2b2b" stroke-width="1.500"/><path d="M0 6.2H13" stroke="#2b2b2b" stroke-width="1.500"/><path d="M2 8.8H11" stroke="#2b2b2b" stroke-width="1.500"/><path d="M0 11.4H13" stroke="#2b2b2b" stroke-width="1.500"/></svg><svg style="left:460px;top:147px;" width="14" height="12" viewBox="0 0 14 12" preserveAspectRatio="none"><path d="M0 1.0H13" stroke="#2b2b2b" stroke-width="1.500"/><path d="M4 3.6H13" stroke="#2b2b2b" stroke-width="1.500"/><path d="M0 6.2H13" stroke="#2b2b2b" stroke-width="1.500"/><path d="M4 8.8H13" stroke="#2b2b2b" stroke-width="1.500"/><path d="M0 11.4H13" stroke="#2b2b2b" stroke-width="1.500"/></svg><svg style="left:482px;top:147px;" width="14" height="12" viewBox="0 0 14 12" preserveAspectRatio="none"><path d="M0 1.0H13" stroke="#2b2b2b" stroke-width="1.500"/><path d="M0 3.6H13" stroke="#2b2b2b" stroke-width="1.500"/><path d="M0 6.2H13" stroke="#2b2b2b" stroke-width="1.500"/><path d="M0 8.8H13" stroke="#2b2b2b" stroke-width="1.500"/><path d="M0 11.4H13" stroke="#2b2b2b" stroke-width="1.500"/></svg><div style="left:503px;top:143px;width:29px;height:20px;background:linear-gradient(#dbe7f6,#cbdbf0 50%,#c3d5ed 51%,#d3e1f4);border:1px solid #a3bbdc;border-radius:3px;box-shadow:inset 0 0 0 1px rgba(255,255,255,.45)"></div><svg style="left:506px;top:146px;" width="20" height="14" viewBox="0 0 20 14" preserveAspectRatio="none"><path d="M3 0L6 3.500H0Z M3 14L6 10.500H0Z" fill="#3a5fb0"/><path d="M3 3V11" stroke="#3a5fb0" stroke-width="1.300"/><path d="M8 2.0H16" stroke="#2e2e2e" stroke-width="1.4"/><path d="M8 5.3H16" stroke="#2e2e2e" stroke-width="1.4"/><path d="M8 8.6H16" stroke="#2e2e2e" stroke-width="1.4"/><path d="M8 11.899999999999999H16" stroke="#2e2e2e" stroke-width="1.4"/></svg><svg style="left:524.5px;top:151px;" width="5" height="3" viewBox="0 0 5 3" preserveAspectRatio="none"><path d="M0 0H5L2.5 3Z" fill="#6f84ab"/></svg><div style="left:536px;top:143px;width:61px;height:20px;background:linear-gradient(#dbe7f6,#cbdbf0 50%,#c3d5ed 51%,#d3e1f4);border:1px solid #a3bbdc;border-radius:3px;box-shadow:inset 0 0 0 1px rgba(255,255,255,.45)"></div><div style="left:566px;top:144px;width:1px;height:18px;background:linear-gradient(#d0ddef,#b7c9e3 50%,#d0ddef)"></div><div style="left:567px;top:144px;width:1px;height:18px;background:rgba(255,255,255,.5)"></div><svg style="left:540px;top:145px;" width="16" height="16" viewBox="0 0 16 16" preserveAspectRatio="none"><path d="M3 7L8 2L13 7L8 11.500Z" fill="#f4f6fa" stroke="#4d5a78" stroke-width="1"/><path d="M6 5V1.500a1.500 1.500 0 0 1 3 0V4" fill="none" stroke="#4d5a78" stroke-width="1"/><path d="M13 7c1.500 2 1.500 4 0 5c-1-1-1-3 0-5Z" fill="#3a6fd0"/><rect x="1" y="13" width="12" height="2.500" fill="#fbf7e4" stroke="#c9c3a5" stroke-width=".5"/></svg><svg style="left:558.5px;top:151px;" width="5" height="3" viewBox="0 0 5 3" preserveAspectRatio="none"><path d="M0 0H5L2.5 3Z" fill="#6f84ab"/></svg><svg style="left:571px;top:146px;" width="13" height="14" viewBox="0 0 13 14" preserveAspectRatio="none"><rect x=".5" y=".5" width="11" height="11" fill="none" stroke="#6b768c" stroke-dasharray="1 1"/><path d="M6 1V12M1 6H12" stroke="#6b768c" stroke-dasharray="1 1"/><path d="M0 12.500H12" stroke="#222" stroke-width="1.600"/></svg><svg style="left:589px;top:151px;" width="5" height="3" viewBox="0 0 5 3" preserveAspectRatio="none"><path d="M0 0H5L2.5 3Z" fill="#6f84ab"/></svg><div style="left:611px;top:112px;width:417px;height:55px;background:#dce8f7;border:1px solid #b9cde8;border-radius:2px"></div><div style="left:616px;top:117px;width:60px;height:44px;background:#fff"></div><div style="left:616px;top:117px;width:60px;height:28px;overflow:hidden;background:none"><div class="t" style="left:3px;top:5.0px;height:20px;line-height:20px;font-size:10px;color:#222;font-family:'Liberation Serif',serif;font-weight:bold;font-size:13.5px;color:#1a1a1a;letter-spacing:.2px">AaBbCcI</div></div><div class="t" style="left:496px;width:300px;text-align:center;top:143.3px;height:20px;line-height:20px;font-size:10.3px;color:#2a2f7a;">Heading 1</div><div style="left:679px;top:113px;width:67px;height:52px;background:#fff;border:1px solid #e3a33e;border-radius:2px;box-shadow:inset 0 0 0 1px #f7c766,inset 0 0 0 2px #fdeab8"></div><div style="left:683px;top:117px;width:60px;height:28px;overflow:hidden;background:none"><div class="t" style="left:3px;top:5.0px;height:20px;line-height:20px;font-size:10px;color:#222;font-size:11.3px;color:#2b2b2b;letter-spacing:-.1px">AaBbCcDc</div></div><div class="t" style="left:563px;width:300px;text-align:center;top:143.3px;height:20px;line-height:20px;font-size:10.3px;color:#2a2f7a;">&para; Normal</div><div style="left:750px;top:117px;width:60px;height:44px;background:#fff"></div><div style="left:750px;top:117px;width:60px;height:28px;overflow:hidden;background:none"><div class="t" style="left:3px;top:5.0px;height:20px;line-height:20px;font-size:10px;color:#222;font-size:11.3px;color:#2b2b2b;letter-spacing:-.1px">AaBbCcDc</div></div><div class="t" style="left:630px;width:300px;text-align:center;top:143.3px;height:20px;line-height:20px;font-size:10.3px;color:#2a2f7a;">&para; No Spaci...</div><div style="left:817px;top:117px;width:60px;height:44px;background:#fff"></div><div style="left:817px;top:117px;width:60px;height:28px;overflow:hidden;background:none"><div class="t" style="left:3px;top:5.0px;height:20px;line-height:20px;font-size:10px;color:#222;font-family:'Liberation Serif',serif;font-weight:bold;font-size:14.5px;color:#4f81bd;letter-spacing:.3px">AaBbCc</div></div><div class="t" style="left:697px;width:300px;text-align:center;top:143.3px;height:20px;line-height:20px;font-size:10.3px;color:#2a2f7a;">Heading 2</div><div style="left:884px;top:117px;width:60px;height:44px;background:#fff"></div><div style="left:884px;top:117px;width:60px;height:28px;overflow:hidden;background:none"><div class="t" style="left:3px;top:0.5px;height:20px;line-height:20px;font-size:10px;color:#222;font-family:'Liberation Serif',serif;font-size:31px;color:#17365d;letter-spacing:-.3px">AaB</div></div><div class="t" style="left:764px;width:300px;text-align:center;top:143.3px;height:20px;line-height:20px;font-size:10.3px;color:#2a2f7a;">Title</div><div style="left:951px;top:117px;width:60px;height:44px;background:#fff"></div><div style="left:951px;top:117px;width:60px;height:28px;overflow:hidden;background:none"><div class="t" style="left:3px;top:5.0px;height:20px;line-height:20px;font-size:10px;color:#222;font-family:'Liberation Serif',serif;font-style:italic;font-size:13.5px;color:#4f81bd;letter-spacing:1.2px">AaBbCc.</div></div><div class="t" style="left:831px;width:300px;text-align:center;top:143.3px;height:20px;line-height:20px;font-size:10.3px;color:#2a2f7a;">Subtitle</div><div style="left:1015px;top:112px;width:13px;height:19px;background:linear-gradient(#eef0f2,#dcdfe4);border:1px solid #c2cad6;border-radius:2px 2px 0 0"></div><svg style="left:1019px;top:120px;" width="5" height="3" viewBox="0 0 5 3" preserveAspectRatio="none"><path d="M0 3H5L2.5 0Z" fill="#a9b2c2"/></svg><div style="left:1015px;top:131px;width:13px;height:18px;background:linear-gradient(#e2ecf8,#c8daf0);border:1px solid #b3c7e3"></div><svg style="left:1019px;top:138px;" width="5" height="3" viewBox="0 0 5 3" preserveAspectRatio="none"><path d="M0 0H5L2.5 3Z" fill="#4b6fae"/></svg><div style="left:1015px;top:149px;width:13px;height:18px;background:linear-gradient(#e2ecf8,#c8daf0);border:1px solid #b3c7e3;border-radius:0 0 2px 2px"></div><svg style="left:1019px;top:154px;" width="5" height="6" viewBox="0 0 5 6" preserveAspectRatio="none"><path d="M0 .5H5" stroke="#4b6fae" stroke-width="1"/><path d="M0 2.500H5L2.5 5.500Z" fill="#4b6fae"/></svg><div class="t" style="left:895px;width:300px;text-align:center;top:109.0px;height:30px;line-height:30px;font-size:26px;color:#c44fa5;font-family:'Liberation Sans',sans-serif;transform:scaleX(.85)">A</div><div class="t" style="left:906px;width:300px;text-align:center;top:113.0px;height:30px;line-height:30px;font-size:26px;color:#3f74c4;font-family:'Liberation Serif',serif">A</div><div class="t" style="left:902px;width:300px;text-align:center;top:140.0px;height:20px;line-height:20px;font-size:10.6px;color:#21438a;">Change</div><div class="t" style="left:899px;width:300px;text-align:center;top:152.0px;height:20px;line-height:20px;font-size:10.6px;color:#21438a;">Styles</div><svg style="left:1065px;top:161px;" width="5" height="3" viewBox="0 0 5 3" preserveAspectRatio="none"><path d="M0 0H5L2.5 3Z" fill="#5a76a8"/></svg><svg style="left:1087px;top:111px;" width="14" height="13" viewBox="0 0 14 13" preserveAspectRatio="none"><rect x="0" y="5" width="5.500" height="8" rx="1" fill="#f4f6fa" stroke="#3b3f55"/><rect x="8" y="5" width="5.500" height="8" rx="1" fill="#f4f6fa" stroke="#3b3f55"/><rect x="1.500" y="0" width="3.500" height="6" fill="#3b3f55"/><rect x="8.500" y="0" width="3.500" height="6" fill="#3b3f55"/><rect x="5" y="3" width="4" height="3" fill="#3b3f55"/></svg><div class="t" style="left:1105px;top:108.5px;height:20px;line-height:20px;font-size:10.6px;color:#21438a;">Find</div><svg style="left:1130px;top:117px;" width="5" height="3" viewBox="0 0 5 3" preserveAspectRatio="none"><path d="M0 0H5L2.5 3Z" fill="#5a76a8"/></svg><div class="t" style="left:1087px;top:125.5px;height:20px;line-height:20px;font-size:7.5px;color:#6b6b6b;">ab</div><div class="t" style="left:1091px;top:132.5px;height:20px;line-height:20px;font-size:7.5px;color:#1d6b2a;font-weight:bold">ac</div><svg style="left:1087px;top:139px;" width="5" height="5" viewBox="0 0 5 5" preserveAspectRatio="none"><path d="M.5 0V3H4M2.500 1.500L4.500 3L2.500 4.500" fill="none" stroke="#3a5fb0" stroke-width="1"/></svg><div class="t" style="left:1105px;top:129.0px;height:20px;line-height:20px;font-size:10.6px;color:#21438a;">Replace</div><svg style="left:1089px;top:153px;" width="9" height="13" viewBox="0 0 9 13" preserveAspectRatio="none"><path d="M.5 .5V10L3 8L5 12.500L7 11.500L5 7.500H8.500Z" fill="#fff" stroke="#333" stroke-width=".9"/></svg><div class="t" style="left:1105px;top:149.5px;height:20px;line-height:20px;font-size:10.6px;color:#21438a;">Select</div><svg style="left:1136px;top:158px;" width="5" height="3" viewBox="0 0 5 3" preserveAspectRatio="none"><path d="M0 0H5L2.5 3Z" fill="#5a76a8"/></svg><div style="left:15px;top:189px;width:1192px;height:714px;background:linear-gradient(#a9c6ec 0%,#9bbae4 10%,#88a9d8 24%,#7196ca 49%,#6089c0 64%,#5680b6 76%,#5984bc 85%,#6892cc 100%)"></div><svg style="left:15px;top:189px;" width="284" height="150" viewBox="0 0 284 150" preserveAspectRatio="none"><path d="M0 0H284V31Q150 50 0 146Z" fill="#fff" fill-opacity=".10"/><path d="M0 0H284V31Q142 56 0 120Z" fill="#fff" fill-opacity=".12"/></svg><div style="left:293px;top:196px;width:6px;height:707px;background:linear-gradient(90deg,rgba(40,70,130,0),rgba(40,70,130,.22))"></div><div style="left:911px;top:196px;width:10px;height:707px;background:linear-gradient(90deg,rgba(30,50,100,.42),rgba(30,50,100,.12) 50%,rgba(30,50,100,0))"></div><div style="left:299px;top:194px;width:612px;height:709px;background:#fff;border-left:1px solid #1c1c1c;border-right:1px solid #1c1c1c"></div><div class="t" style="left:533.2px;top:245.7px;height:30px;line-height:30px;font-size:22.6px;color:#0a0a0a;font-weight:bold;transform:scaleX(.936);transform-origin:0 50%">Visual Identity</div><svg style="left:527px;top:336px;" width="20" height="38" viewBox="0 0 20 38" preserveAspectRatio="none"><path d="M3 5.800L18.600 1.800V36.500L3 32.500Z" fill="#f5a21b"/></svg><div class="t" style="left:511.8px;top:333.6px;height:44px;line-height:44px;font-size:36px;color:#8a0f40;font-weight:bold;letter-spacing:.15px;-webkit-text-stroke:.5px #8a0f40">d-termined</div><svg style="left:631px;top:431px;" width="7" height="14" viewBox="0 0 7 14" preserveAspectRatio="none"><path d="M.5 .5C2 .5 3 1 3.500 2C4 1 5 .5 6.500 .5M.5 13.500C2 13.500 3 13 3.500 12C4 13 5 13.500 6.500 13.500M3.500 2V12" fill="none" stroke="#222" stroke-width="1"/></svg><div style="left:1191px;top:189px;width:16px;height:714px;background:#a4c1ea"></div><div style="left:1191px;top:211px;width:16px;height:644px;background:linear-gradient(90deg,#a9c4ea 0,#7d9ecb 2px,#7898c7 8px,#85a5d0 16px)"></div><div style="left:1195px;top:192px;width:8px;height:2px;background:#4e5d80"></div><svg style="left:1193px;top:197px;" width="12" height="11" viewBox="0 0 12 11" preserveAspectRatio="none"><path d="M1 2.500H4L5 1H7V3H11V9H1Z" fill="#f0e9ee" stroke="#8b8fa8" stroke-width="1"/><circle cx="7.500" cy="9" r="1.800" fill="#9fd0ee" stroke="#6a88b5" stroke-width=".6"/></svg><svg style="left:1195px;top:217px;" width="9" height="5" viewBox="0 0 9 5" preserveAspectRatio="none"><path d="M0 5L4.500 0L9 5Z" fill="#51628a"/></svg><div style="left:1192.5px;top:624px;width:13px;height:36px;background:linear-gradient(90deg,#f5f7fb,#dde3ee 55%,#c8d1e3);border:1px solid #7489ad;border-radius:2px;box-shadow:inset 0 0 0 1px rgba(255,255,255,.6)"></div><svg style="left:1196px;top:638px;" width="7" height="8" viewBox="0 0 7 8" preserveAspectRatio="none"><path d="M0 .5H7M0 2.500H7M0 4.500H7M0 6.500H7" stroke="#6d7c96" stroke-width="1"/></svg><svg style="left:1195px;top:845px;" width="9" height="5" viewBox="0 0 9 5" preserveAspectRatio="none"><path d="M0 0L4.500 5L9 0Z" fill="#51628a"/></svg><svg style="left:1194.5px;top:859px;" width="7" height="7" viewBox="0 0 7 7" preserveAspectRatio="none"><path d="M3.500 0L6.500 3H.5Z M3.500 2.500L7 6.500H0Z" fill="#111"/></svg><div style="left:1194.5px;top:874.5px;width:7px;height:7px;border-radius:50%;background:radial-gradient(circle at 40% 35%,#f4f4f4,#9a9a9a 70%,#444);border:1px solid #333"></div><svg style="left:1194.5px;top:890px;" width="7" height="7" viewBox="0 0 7 7" preserveAspectRatio="none"><path d="M0 .5H7L3.500 4Z M.5 3.500H6.500L3.500 7Z" fill="#111"/></svg><div style="left:15px;top:903px;width:1192px;height:20px;background:linear-gradient(#d9e6fa 0,#cfdff7 35%,#b9d0ef 50%,#c6d9f3 75%,#d6e4f8 100%);border-top:1px solid #8fb0dc"></div><div style="left:944px;top:904px;width:263px;height:19px;background:linear-gradient(#bed3f0 0,#a9c4ea 45%,#98b7e3 50%,#adc7ec 100%)"></div><div style="left:944px;top:904px;width:1px;height:19px;background:#e4eefb"></div><div class="t" style="left:22.5px;top:903.7px;height:20px;line-height:20px;font-size:10.3px;color:#2b3f66;">Page: 11 of 16</div><div class="t" style="left:106px;top:903.7px;height:20px;line-height:20px;font-size:10.3px;color:#2b3f66;">Words: 801</div><div style="left:97px;top:905px;width:1px;height:17px;background:#9db9df"></div><div style="left:98px;top:905px;width:1px;height:17px;background:#eef4fd"></div><div style="left:168px;top:905px;width:1px;height:17px;background:#9db9df"></div><div style="left:169px;top:905px;width:1px;height:17px;background:#eef4fd"></div><div style="left:200px;top:905px;width:1px;height:17px;background:#9db9df"></div><div style="left:201px;top:905px;width:1px;height:17px;background:#eef4fd"></div><svg style="left:176px;top:906px;" width="16" height="14" viewBox="0 0 16 14" preserveAspectRatio="none"><path d="M1 8L6 5L12 7.500L7 11Z" fill="#f4f6fb" stroke="#66708a" stroke-width=".9"/><path d="M1 8V10L7 13V11Z M7 11V13L12 9.500V7.500Z" fill="#cfd6e6" stroke="#66708a" stroke-width=".7"/><path d="M8 .8L14 6.500M14 .8L8 6.500" stroke="#e0232b" stroke-width="1.800"/></svg><div style="left:950px;top:905px;width:86px;height:16px;background:linear-gradient(#d7e5f8,#c0d5f1 50%,#b3cbec 51%,#cbdcf4);border:1px solid #9ab4d8;border-radius:2px"></div><div style="left:951px;top:905px;width:17px;height:16px;background:linear-gradient(#fde9bb,#fbd083 50%,#f9c05c 51%,#fde2a0);border:1px solid #e3b86c"></div><div style="left:984px;top:906px;width:1px;height:14px;background:#9fb8da"></div><div style="left:1001px;top:906px;width:1px;height:14px;background:#9fb8da"></div><div style="left:1018px;top:906px;width:1px;height:14px;background:#9fb8da"></div><svg style="left:954px;top:907px;" width="11" height="12" viewBox="0 0 11 12" preserveAspectRatio="none"><rect x=".5" y=".5" width="10" height="11" fill="#fdfdfd" stroke="#6c6c6c"/><path d="M2.5 3.0H8.5" stroke="#5c6577" stroke-width="1"/><path d="M2.5 3.2H8.5" stroke="#5c6577" stroke-width="1"/><path d="M2.5 5.4H8.5" stroke="#5c6577" stroke-width="1"/><path d="M2.5 7.6000000000000005H8.5" stroke="#5c6577" stroke-width="1"/></svg><svg style="left:970px;top:907px;" width="12" height="12" viewBox="0 0 12 12" preserveAspectRatio="none"><path d="M.5 1.500C3 .5 5 1 6 2.500C7 1 9 .5 11.500 1.500V10.500C9 9.500 7 10 6 11.500C5 10 3 9.500 .5 10.500Z" fill="#f8f8f4" stroke="#5d5d4d" stroke-width=".9"/><path d="M6 2.500V11.500" stroke="#5d5d4d"/></svg><svg style="left:987px;top:907px;" width="13" height="13" viewBox="0 0 13 13" preserveAspectRatio="none"><rect x=".5" y=".5" width="10" height="8" fill="#fdfdfd" stroke="#6c6c6c"/><path d="M2 3H9M2 5H9" stroke="#9a9a9a"/><circle cx="9.500" cy="9.500" r="3" fill="#3a9a5a" stroke="#1f6a8a" stroke-width=".8"/></svg><svg style="left:1004px;top:908px;" width="11" height="11" viewBox="0 0 11 11" preserveAspectRatio="none"><path d="M2 1.500H7M4 3.500H10M6 5.500H10M4 7.500H10M6 9.500H10" stroke="#8a93a6" stroke-width="1"/></svg><svg style="left:1021px;top:908px;" width="11" height="11" viewBox="0 0 11 11" preserveAspectRatio="none"><path d="M0 1.500H11M0 3.500H11M0 5.500H11M0 7.500H11M0 9.500H11" stroke="#5a6273" stroke-width="1"/></svg><div class="t" style="left:1043px;top:903.5px;height:20px;line-height:20px;font-size:10.3px;color:#2b3f66;">80%</div><div style="left:1093px;top:912px;width:94px;height:1px;background:#eef4fc"></div><div style="left:1093px;top:913px;width:94px;height:1px;background:#6e8dbd"></div><div style="left:1077.5px;top:905.0px;width:15px;height:15px;border-radius:50%;background:linear-gradient(#fefeff,#c5d3e8);border:1px solid #6b82a8;box-shadow:0 0 0 1px rgba(255,255,255,.55)"></div><svg style="left:1081.5px;top:909.0px;" width="7" height="7" viewBox="0 0 7 7" preserveAspectRatio="none"><path d="M0 3.500H7" stroke="#4c5f82" stroke-width="1.800"/></svg><div style="left:1187.0px;top:905.0px;width:15px;height:15px;border-radius:50%;background:linear-gradient(#fefeff,#c5d3e8);border:1px solid #6b82a8;box-shadow:0 0 0 1px rgba(255,255,255,.55)"></div><svg style="left:1191.0px;top:909.0px;" width="7" height="7" viewBox="0 0 7 7" preserveAspectRatio="none"><path d="M0 3.500H7" stroke="#4c5f82" stroke-width="1.800"/><path d="M3.500 0V7" stroke="#4c5f82" stroke-width="1.800"/></svg><div style="left:1141px;top:908px;width:1px;height:10px;background:#e8f0fb"></div><svg style="left:1126px;top:905px;" width="9" height="14" viewBox="0 0 9 14" preserveAspectRatio="none"><path d="M.5 .5H8.500V9L4.500 13L.5 9Z" fill="#e9eef7" stroke="#6a7e9f" stroke-width="1"/><path d="M2 2H7V8L4.500 10.500L2 8Z" fill="#c5d1e5"/></svg><div style="left:15px;top:923px;width:1192px;height:28px;background:linear-gradient(#3168d5 0,#4993e6 6%,#3a80e8 12%,#2a67dc 22%,#2560d9 40%,#245ddb 70%,#2157d4 86%,#1b49bf 94%,#1941a5 100%)"></div><div style="left:15px;top:923px;width:89px;height:28px;background:linear-gradient(#388238 0,#5eac56 7%,#4aa346 14%,#3c9a3c 30%,#379637 60%,#348d33 85%,#2a7a2a 100%);border-radius:0 15px 14px 0 / 0 20px 20px 0;box-shadow:inset -3px 0 5px rgba(20,70,20,.55), inset 0 2px 3px rgba(255,255,255,.35), 2px 0 3px rgba(10,30,90,.6)"></div><svg style="left:23.835px;top:929.095px;" width="17.019000000000002" height="15.884400000000001" viewBox="-1 0 16 15" preserveAspectRatio="none"><path d="M1 2.500C3 1 5 1 7 2L6 7C4 6 2.500 6 .2 7.300Z" fill="#e8562a"/><path d="M8 2.300C10 3.300 12 3.300 14.500 1.800L13.500 7C11.500 8.300 9 8.300 7 7.300Z" fill="#7cc142"/><path d="M0 8.300C2.200 7 4 7 5.800 8L4.800 13C3 12 1.500 12 -.8 13.300Z" fill="#3f7fe0"/><path d="M6.800 8.300C9 9.300 11 9.300 13.300 8L12.300 13C10 14.300 8 14.300 5.800 13.300Z" fill="#f8c426"/></svg><div class="t" style="left:46.620000000000005px;top:924.5px;height:24px;line-height:24px;font-size:16.275000000000002px;color:#fff;font-weight:bold;font-style:italic;letter-spacing:-.2px;text-shadow:1px 1px 1px rgba(0,0,0,.45)">start</div><div style="left:1037px;top:923px;width:170px;height:28px;background:linear-gradient(#0c59b9 0,#139ee9 8%,#18b5f2 14%,#139be9 28%,#1290e8 50%,#0d8dea 80%,#0d7ada 92%,#095bc9 100%);border-left:1px solid #0a3fa0;box-shadow:inset 1px 0 0 #3fb6f5"></div><div class="t" style="left:1154px;top:927.5px;height:20px;line-height:20px;font-size:10.0px;color:#fff;">1:07 PM</div><div style="left:114.5px;top:925.79px;width:143px;height:22.42px;background:linear-gradient(#5a98f0 0,#3f83ec 10%,#3c80ea 55%,#3675df 85%,#2f69d0 100%);border:1px solid #2a5fcb;border-radius:3px;box-shadow:inset 1px 1px 0 rgba(255,255,255,.28)"></div><svg style="left:124.5px;top:930.2px;" width="13.6" height="13.6" viewBox="0 0 16 16" preserveAspectRatio="none"><circle cx="8" cy="8" r="8" fill="#e33b2e"/><path d="M8 8L1.100 4A8 8 0 0 0 8 16L11.500 10Z" fill="#3aa757"/><path d="M8 8L8 16A8 8 0 0 0 15.700 5.800L8 5.800Z" fill="#fbc116"/><path d="M8 8L15.700 5.800A8 8 0 0 0 1.100 4Z" fill="#e33b2e"/><circle cx="8" cy="8" r="3.600" fill="#f4f4f4"/><circle cx="8" cy="8" r="2.800" fill="#4a8af4"/></svg><div class="t" style="left:140.5px;top:927.5px;height:20px;line-height:20px;font-size:10.0px;color:#fff;"><span style="color:#ffc65a;font-weight:bold">3</span> Google Chrome</div><div style="left:258.7px;top:925.79px;width:143px;height:22.42px;background:linear-gradient(#5a98f0 0,#3f83ec 10%,#3c80ea 55%,#3675df 85%,#2f69d0 100%);border:1px solid #2a5fcb;border-radius:3px;box-shadow:inset 1px 1px 0 rgba(255,255,255,.28)"></div><svg style="left:266.7px;top:931.0px;" width="15" height="12" viewBox="0 0 15 12" preserveAspectRatio="none"><path d="M.5 1.500H5L6.500 3H13.500V11.500H.5Z" fill="#f7d774" stroke="#b8932e" stroke-width=".8"/><path d="M.5 11.500L3 5H15L13.500 11.500Z" fill="#fbe9a4" stroke="#b8932e" stroke-width=".8"/></svg><div class="t" style="left:284.7px;top:927.5px;height:20px;line-height:20px;font-size:10.0px;color:#fff;">Supplements to form</div><div style="left:402.9px;top:925.79px;width:143px;height:22.42px;background:linear-gradient(#1c44a8 0,#1e4fbf 12%,#1f52c4 60%,#2358cc 100%);border:1px solid #173a94;border-radius:3px;box-shadow:inset 1px 1px 2px rgba(0,0,30,.5)"></div><svg style="left:412.9px;top:930.0px;" width="15" height="14" viewBox="0 0 15 14" preserveAspectRatio="none"><rect x="3" y="0" width="11" height="13" rx="1" fill="#f3f6fb" stroke="#8a97b3" stroke-width=".8"/><rect x="0" y="3" width="10" height="9" rx="1" fill="#2f5ec0" stroke="#d9e3f6" stroke-width=".7"/><text x="1.300" y="10.500" font-size="8" font-weight="bold" font-style="italic" font-family="Liberation Serif" fill="#fff">W</text></svg><div class="t" style="left:428.9px;top:927.5px;height:20px;line-height:20px;font-size:10.0px;color:#fff;"><span style="color:#ffc65a;font-weight:bold">3</span> Microsoft Office ...</div><div style="left:547.0999999999999px;top:925.79px;width:143px;height:22.42px;background:linear-gradient(#5a98f0 0,#3f83ec 10%,#3c80ea 55%,#3675df 85%,#2f69d0 100%);border:1px solid #2a5fcb;border-radius:3px;box-shadow:inset 1px 1px 0 rgba(255,255,255,.28)"></div><svg style="left:557.0999999999999px;top:930.0px;" width="14" height="14" viewBox="0 0 14 14" preserveAspectRatio="none"><circle cx="7" cy="7" r="6.500" fill="#0f2a36" stroke="#3a6a7a" stroke-width=".8"/><path d="M9.500 4.500A3.500 3.500 0 1 0 9.500 9.500" fill="none" stroke="#35c6c0" stroke-width="1.800"/></svg><div class="t" style="left:573.0999999999999px;top:927.5px;height:20px;line-height:20px;font-size:10.0px;color:#fff;">Advanced SystemCa...</div><div style="left:691.3px;top:925.79px;width:143px;height:22.42px;background:linear-gradient(#5a98f0 0,#3f83ec 10%,#3c80ea 55%,#3675df 85%,#2f69d0 100%);border:1px solid #2a5fcb;border-radius:3px;box-shadow:inset 1px 1px 0 rgba(255,255,255,.28)"></div><svg style="left:701.3px;top:930.0px;" width="14" height="15" viewBox="0 0 14 15" preserveAspectRatio="none"><path d="M.5 .5H10L13.500 4V14.500H.5Z" fill="#fbfbfb" stroke="#9a9a9a" stroke-width=".8"/><rect x="0" y="2" width="11" height="9" fill="#d8261c"/><path d="M2 9.500C4 7 5.500 4.500 5 3C4.500 2 3.800 3.500 5 5.500C6 7 8 8 9.500 7.500C8 7 4 8 2 9.500Z" fill="none" stroke="#fff" stroke-width=".9"/></svg><div class="t" style="left:717.3px;top:927.5px;height:20px;line-height:20px;font-size:10.0px;color:#fff;">2013010712342162...</div><div style="left:835.5px;top:925.79px;width:143px;height:22.42px;background:linear-gradient(#5a98f0 0,#3f83ec 10%,#3c80ea 55%,#3675df 85%,#2f69d0 100%);border:1px solid #2a5fcb;border-radius:3px;box-shadow:inset 1px 1px 0 rgba(255,255,255,.28)"></div><svg style="left:844.5px;top:929.0px;" width="16" height="16" viewBox="0 0 16 16" preserveAspectRatio="none"><circle cx="8.00" cy="2.90" r="2.2" fill="url(#dg)" stroke="#3a2500" stroke-width=".9"/><circle cx="4.02" cy="5.20" r="2.2" fill="url(#dg)" stroke="#3a2500" stroke-width=".9"/><circle cx="4.02" cy="9.80" r="2.2" fill="url(#dg)" stroke="#3a2500" stroke-width=".9"/><circle cx="8.00" cy="12.10" r="2.2" fill="url(#dg)" stroke="#3a2500" stroke-width=".9"/><circle cx="11.98" cy="9.80" r="2.2" fill="url(#dg)" stroke="#3a2500" stroke-width=".9"/><circle cx="11.98" cy="5.20" r="2.2" fill="url(#dg)" stroke="#3a2500" stroke-width=".9"/><circle cx="8" cy="7.5" r="2.2" fill="#f9a11c"/></svg><div class="t" style="left:861.5px;top:927.5px;height:20px;line-height:20px;font-size:10.0px;color:#fff;">GoToMeeting</div><svg style="left:250px;top:936px;" width="5" height="3" viewBox="0 0 5 3" preserveAspectRatio="none"><path d="M0 0H5L2.500 3Z" fill="#fff"/></svg><svg style="left:539px;top:936px;" width="5" height="3" viewBox="0 0 5 3" preserveAspectRatio="none"><path d="M0 0H5L2.500 3Z" fill="#fff"/></svg><div style="left:1028px;top:929px;width:17px;height:17px;border-radius:50%;background:radial-gradient(circle at 35% 30%,#7cc8ff,#2a86ea 45%,#1459cc 85%);border:1px solid #a9c3e6"></div><svg style="left:1033px;top:933px;" width="6" height="9" viewBox="0 0 6 9" preserveAspectRatio="none"><path d="M5 .8L1.500 4.500L5 8.200" fill="none" stroke="#fff" stroke-width="1.800"/></svg><svg style="left:1046.5px;top:930.5px;" width="15" height="15" viewBox="0 0 16 16" preserveAspectRatio="none"><circle cx="8.00" cy="3.10" r="2.7" fill="url(#dg2)" stroke="#fff3e0" stroke-width=".7"/><circle cx="3.76" cy="5.55" r="2.7" fill="url(#dg2)" stroke="#fff3e0" stroke-width=".7"/><circle cx="3.76" cy="10.45" r="2.7" fill="url(#dg2)" stroke="#fff3e0" stroke-width=".7"/><circle cx="8.00" cy="12.90" r="2.7" fill="url(#dg2)" stroke="#fff3e0" stroke-width=".7"/><circle cx="12.24" cy="10.45" r="2.7" fill="url(#dg2)" stroke="#fff3e0" stroke-width=".7"/><circle cx="12.24" cy="5.55" r="2.7" fill="url(#dg2)" stroke="#fff3e0" stroke-width=".7"/><circle cx="8" cy="8" r="2.4000000000000004" fill="#f6881c"/></svg><svg style="left:1063px;top:931px;" width="14" height="14" viewBox="0 0 14 14" preserveAspectRatio="none"><circle cx="7" cy="7" r="6.500" fill="#0f2a36" stroke="#3a6a7a" stroke-width=".8"/><path d="M9.500 4.500A3.500 3.500 0 1 0 9.500 9.500" fill="none" stroke="#35c6c0" stroke-width="1.800"/></svg><svg style="left:1080px;top:931px;" width="16" height="14" viewBox="0 0 17 15" preserveAspectRatio="none"><path d="M4.200 1L8.500 3.500L4.200 6L0 3.500Z M12.800 1L17 3.500L12.800 6L8.500 3.500Z" fill="#b9dcf8" stroke="#4f8fd0" stroke-width=".6"/><path d="M2.500 6.500L8.500 4L14.500 6.500V11L8.500 13.500L2.500 11Z" fill="#5aa2e6" stroke="#2f6fb8" stroke-width=".6"/><path d="M8.500 4V13.500" stroke="#2f6fb8" stroke-width=".6"/><path d="M2.500 6.500L8.500 9L14.500 6.500" fill="none" stroke="#cfe6fb" stroke-width=".7"/><circle cx="12.500" cy="11.800" r="3.300" fill="#2fa53c" stroke="#e9f7ea" stroke-width=".6"/><path d="M10.800 11.800L12.100 13.100L14.300 10.500" fill="none" stroke="#fff" stroke-width="1.100"/></svg><svg style="left:1096px;top:930px;" width="15" height="15" viewBox="0 0 15 15" preserveAspectRatio="none"><rect x="5" y="0" width="9" height="7" fill="#cfe0f5" stroke="#3c5a94" stroke-width=".9"/><rect x="0" y="5" width="9" height="7" fill="#a9c6ee" stroke="#3c5a94" stroke-width=".9"/><path d="M2 14H8M9 9H13" stroke="#d9e4f4" stroke-width="1.200"/></svg><svg style="left:1113px;top:930px;" width="16" height="15" viewBox="0 0 16 15" preserveAspectRatio="none"><path d="M0 1H8M0 3.500H8M0 6H8M0 8.500H8M0 11H8" stroke="#1e2c6e" stroke-width="1.600"/><rect x="8.500" y="0" width="3" height="12" fill="#5a4ea0"/><circle cx="11.500" cy="11" r="3.500" fill="#e0262e"/><path d="M10 9.500L13 12.500M13 9.500L10 12.500" stroke="#fff" stroke-width="1"/></svg><svg style="left:1130px;top:929px;" width="16" height="17" viewBox="0 0 16 17" preserveAspectRatio="none"><path d="M1 5L8 2L15 5V15L8 16.500L1 15Z" fill="#c9c4ee" stroke="#8d86cf" stroke-width=".7"/><path d="M8 1.500C9.500 1.500 10 3 10 5L9 10H7L6 5C6 3 6.500 1.500 8 1.500Z" fill="#1b2ba8"/><circle cx="8" cy="12.500" r="1.600" fill="#1b2ba8"/></svg><div style="left:989px;top:930px;width:13px;height:13px;background:#fff;border:1.500px solid #111;border-radius:2px;box-shadow:1px 1px 0 #111"></div><div class="t" style="left:845.5px;width:300px;text-align:center;top:926.5px;height:20px;line-height:20px;font-size:10.5px;color:#000;font-weight:bold">?</div><svg style="left:1011px;top:929px;" width="10" height="8" viewBox="0 0 10 8" preserveAspectRatio="none"><path d="M3.500 .8H9.200V4.200H7.500M.8 3H6.800V6.800H.8Z" fill="none" stroke="#fff" stroke-width="1.200"/></svg><svg style="left:1013px;top:941px;" width="6" height="4" viewBox="0 0 6 4" preserveAspectRatio="none"><path d="M0 0H6L3 3.500Z" fill="#fff"/></svg><div style="left:0px;top:994px;width:1280px;height:30px;background:linear-gradient(#3168d5 0,#4993e6 6%,#3a80e8 12%,#2a67dc 22%,#2560d9 40%,#245ddb 70%,#2157d4 86%,#1b49bf 94%,#1941a5 100%)"></div><div style="left:0px;top:994px;width:97px;height:30px;background:linear-gradient(#388238 0,#5eac56 7%,#4aa346 14%,#3c9a3c 30%,#379637 60%,#348d33 85%,#2a7a2a 100%);border-radius:0 16px 15px 0 / 0 21px 21px 0;box-shadow:inset -3px 0 5px rgba(20,70,20,.55), inset 0 2px 3px rgba(255,255,255,.35), 2px 0 3px rgba(10,30,90,.6)"></div><svg style="left:10.5px;top:1000.5px;" width="18.3" height="17.08" viewBox="-1 0 16 15" preserveAspectRatio="none"><path d="M1 2.500C3 1 5 1 7 2L6 7C4 6 2.500 6 .2 7.300Z" fill="#e8562a"/><path d="M8 2.300C10 3.300 12 3.300 14.500 1.800L13.500 7C11.500 8.300 9 8.300 7 7.300Z" fill="#7cc142"/><path d="M0 8.300C2.200 7 4 7 5.800 8L4.800 13C3 12 1.500 12 -.8 13.300Z" fill="#3f7fe0"/><path d="M6.800 8.300C9 9.300 11 9.300 13.300 8L12.300 13C10 14.300 8 14.300 5.800 13.300Z" fill="#f8c426"/></svg><div class="t" style="left:34.5px;top:996.5px;height:24px;line-height:24px;font-size:17.5px;color:#fff;font-weight:bold;font-style:italic;letter-spacing:-.2px;text-shadow:1px 1px 1px rgba(0,0,0,.45)">start</div><div style="left:1097px;top:994px;width:183px;height:30px;background:linear-gradient(#0c59b9 0,#139ee9 8%,#18b5f2 14%,#139be9 28%,#1290e8 50%,#0d8dea 80%,#0d7ada 92%,#095bc9 100%);border-left:1px solid #0a3fa0;box-shadow:inset 1px 0 0 #3fb6f5"></div><div class="t" style="left:1224px;top:999.5px;height:20px;line-height:20px;font-size:10.65px;color:#fff;">1:07 PM</div><div style="left:198.8px;top:997.0px;width:158px;height:24.0px;background:linear-gradient(#5a98f0 0,#3f83ec 10%,#3c80ea 55%,#3675df 85%,#2f69d0 100%);border:1px solid #2a5fcb;border-radius:3px;box-shadow:inset 1px 1px 0 rgba(255,255,255,.28)"></div><svg style="left:207.8px;top:1001.0px;" width="17" height="16" viewBox="0 0 17 16" preserveAspectRatio="none"><path d="M2 9H15L16 14H1Z" fill="#b9bcc4" stroke="#5c5f68" stroke-width=".8"/><rect x="3" y="11" width="6" height="1.500" fill="#3b3b3b"/><path d="M9 1L13 3L8.500 9L5.500 8Z" fill="#e8a33a" stroke="#8a5a12" stroke-width=".7"/><path d="M4 8L9 9.500L8 11L3 9.500Z" fill="#caa04a"/></svg><div class="t" style="left:227.8px;top:999.0px;height:20px;line-height:20px;font-size:10.65px;color:#fff;">Disk Cleanup</div><div style="left:358.8px;top:997.0px;width:158px;height:24.0px;background:linear-gradient(#5a98f0 0,#3f83ec 10%,#3c80ea 55%,#3675df 85%,#2f69d0 100%);border:1px solid #2a5fcb;border-radius:3px;box-shadow:inset 1px 1px 0 rgba(255,255,255,.28)"></div><svg style="left:368.8px;top:1001.5px;" width="15.0" height="15.0" viewBox="0 0 16 16" preserveAspectRatio="none"><circle cx="8" cy="8" r="8" fill="#e33b2e"/><path d="M8 8L1.100 4A8 8 0 0 0 8 16L11.500 10Z" fill="#3aa757"/><path d="M8 8L8 16A8 8 0 0 0 15.700 5.800L8 5.800Z" fill="#fbc116"/><path d="M8 8L15.700 5.800A8 8 0 0 0 1.100 4Z" fill="#e33b2e"/><circle cx="8" cy="8" r="3.600" fill="#f4f4f4"/><circle cx="8" cy="8" r="2.800" fill="#4a8af4"/></svg><div class="t" style="left:387.8px;top:999.0px;height:20px;line-height:20px;font-size:10.65px;color:#fff;">Lexi Smith - Outlook ...</div><div style="left:518.8px;top:997.0px;width:158px;height:24.0px;background:linear-gradient(#5a98f0 0,#3f83ec 10%,#3c80ea 55%,#3675df 85%,#2f69d0 100%);border:1px solid #2a5fcb;border-radius:3px;box-shadow:inset 1px 1px 0 rgba(255,255,255,.28)"></div><svg style="left:528.8px;top:1001.5px;" width="15.0" height="15.0" viewBox="0 0 16 16" preserveAspectRatio="none"><circle cx="8" cy="8" r="8" fill="#e33b2e"/><path d="M8 8L1.100 4A8 8 0 0 0 8 16L11.500 10Z" fill="#3aa757"/><path d="M8 8L8 16A8 8 0 0 0 15.700 5.800L8 5.800Z" fill="#fbc116"/><path d="M8 8L15.700 5.800A8 8 0 0 0 1.100 4Z" fill="#e33b2e"/><circle cx="8" cy="8" r="3.600" fill="#f4f4f4"/><circle cx="8" cy="8" r="2.800" fill="#4a8af4"/></svg><div class="t" style="left:547.8px;top:999.0px;height:20px;line-height:20px;font-size:10.65px;color:#fff;">Citrix Online - Google ...</div><div style="left:678.8px;top:997.0px;width:158px;height:24.0px;background:linear-gradient(#1c44a8 0,#1e4fbf 12%,#1f52c4 60%,#2358cc 100%);border:1px solid #173a94;border-radius:3px;box-shadow:inset 1px 1px 2px rgba(0,0,30,.5)"></div><svg style="left:687.8px;top:1001.0px;" width="16" height="16" viewBox="0 0 16 16" preserveAspectRatio="none"><circle cx="8.00" cy="2.90" r="2.2" fill="url(#dg)" stroke="#3a2500" stroke-width=".9"/><circle cx="4.02" cy="5.20" r="2.2" fill="url(#dg)" stroke="#3a2500" stroke-width=".9"/><circle cx="4.02" cy="9.80" r="2.2" fill="url(#dg)" stroke="#3a2500" stroke-width=".9"/><circle cx="8.00" cy="12.10" r="2.2" fill="url(#dg)" stroke="#3a2500" stroke-width=".9"/><circle cx="11.98" cy="9.80" r="2.2" fill="url(#dg)" stroke="#3a2500" stroke-width=".9"/><circle cx="11.98" cy="5.20" r="2.2" fill="url(#dg)" stroke="#3a2500" stroke-width=".9"/><circle cx="8" cy="7.5" r="2.2" fill="#f9a11c"/></svg><div class="t" style="left:707.8px;top:999.0px;height:20px;line-height:20px;font-size:10.65px;color:#fff;">GoToMeeting</div><div style="left:838.8px;top:997.0px;width:158px;height:24.0px;background:linear-gradient(#5a98f0 0,#3f83ec 10%,#3c80ea 55%,#3675df 85%,#2f69d0 100%);border:1px solid #2a5fcb;border-radius:3px;box-shadow:inset 1px 1px 0 rgba(255,255,255,.28)"></div><svg style="left:848.8px;top:1001.0px;" width="15" height="16" viewBox="0 0 15 16" preserveAspectRatio="none"><path d="M2.500 .5H11L14.500 4V15.500H2.500Z" fill="#fdfdfd" stroke="#7f8aa3" stroke-width=".8"/><path d="M5 6H12M5 8H12M5 10H12M5 12H10" stroke="#b8c0d0" stroke-width=".8"/><rect x="0" y="2" width="9" height="8" fill="#2f5ec0"/><text x=".8" y="8.800" font-size="7.500" font-weight="bold" font-family="Liberation Serif" fill="#fff">W</text></svg><div class="t" style="left:867.8px;top:999.0px;height:20px;line-height:20px;font-size:10.65px;color:#fff;">Document1 - Microsof...</div><svg style="left:109px;top:1001px;" width="15" height="16" viewBox="0 0 15 16" preserveAspectRatio="none"><rect x="1" y="2" width="12" height="12" rx="2" fill="#eaf3ff" stroke="#2a56b0" stroke-width="1"/><path d="M4 6H10M4 8.500H8" stroke="#2a56b0" stroke-width="1.200"/><path d="M9 11L13.500 4.500L15 6L10.500 12Z" fill="#f1b13a" stroke="#7a5410" stroke-width=".5"/><circle cx="13" cy="3" r="1.600" fill="#e23a2c"/></svg><svg style="left:132.5px;top:1001.5px;" width="15.0" height="15.0" viewBox="0 0 16 16" preserveAspectRatio="none"><circle cx="8" cy="8" r="8" fill="#e33b2e"/><path d="M8 8L1.100 4A8 8 0 0 0 8 16L11.500 10Z" fill="#3aa757"/><path d="M8 8L8 16A8 8 0 0 0 15.700 5.800L8 5.800Z" fill="#fbc116"/><path d="M8 8L15.700 5.800A8 8 0 0 0 1.100 4Z" fill="#e33b2e"/><circle cx="8" cy="8" r="3.600" fill="#f4f4f4"/><circle cx="8" cy="8" r="2.800" fill="#4a8af4"/></svg><svg style="left:155px;top:1000px;" width="18" height="18" viewBox="0 0 18 18" preserveAspectRatio="none"><text x="2.500" y="15" font-size="19" font-weight="bold" font-family="Liberation Sans" fill="#56b4f7" stroke="#1e6fd0" stroke-width=".5">e</text><path d="M2 13C-1 18 7 15 13 8.500C18 3 16 -1 9.500 3" fill="none" stroke="#f5b52e" stroke-width="1.500"/></svg><div class="t" style="left:183px;top:995.0px;height:20px;line-height:20px;font-size:11px;color:#e8f0ff;letter-spacing:-1px">»</div><div style="left:1088px;top:1000px;width:18px;height:18px;border-radius:50%;background:radial-gradient(circle at 35% 30%,#7cc8ff,#2a86ea 45%,#1459cc 85%);border:1px solid #a9c3e6"></div><svg style="left:1093px;top:1004px;" width="7" height="10" viewBox="0 0 7 10" preserveAspectRatio="none"><path d="M5.500 1L1.800 5L5.500 9" fill="none" stroke="#fff" stroke-width="2"/></svg><svg style="left:1108px;top:1001px;" width="15" height="15" viewBox="0 0 15 15" preserveAspectRatio="none"><rect x="0" y="1" width="12" height="13" fill="#b8141a"/><path d="M2 12C4.500 9 6 6 5.500 4C5 2.500 4 4.500 5.500 7C6.500 8.500 9 10 10.500 9.500C9 8.500 4.500 10 2 12Z" fill="none" stroke="#fff" stroke-width="1"/><path d="M11.500 1.500L12.300 3.500L14.500 3.800L12.800 5L13.300 7L11.500 5.800L9.800 7L10.300 5L8.600 3.800L10.700 3.500Z" fill="#f8c62c"/></svg><svg style="left:1126px;top:1001px;" width="16" height="16" viewBox="0 0 16 16" preserveAspectRatio="none"><circle cx="8.00" cy="3.10" r="2.7" fill="url(#dg2)" stroke="#fff3e0" stroke-width=".7"/><circle cx="3.76" cy="5.55" r="2.7" fill="url(#dg2)" stroke="#fff3e0" stroke-width=".7"/><circle cx="3.76" cy="10.45" r="2.7" fill="url(#dg2)" stroke="#fff3e0" stroke-width=".7"/><circle cx="8.00" cy="12.90" r="2.7" fill="url(#dg2)" stroke="#fff3e0" stroke-width=".7"/><circle cx="12.24" cy="10.45" r="2.7" fill="url(#dg2)" stroke="#fff3e0" stroke-width=".7"/><circle cx="12.24" cy="5.55" r="2.7" fill="url(#dg2)" stroke="#fff3e0" stroke-width=".7"/><circle cx="8" cy="8" r="2.4000000000000004" fill="#f6881c"/></svg><svg style="left:1144px;top:1001px;" width="17" height="15" viewBox="0 0 17 15" preserveAspectRatio="none"><path d="M4.200 1L8.500 3.500L4.200 6L0 3.500Z M12.800 1L17 3.500L12.800 6L8.500 3.500Z" fill="#b9dcf8" stroke="#4f8fd0" stroke-width=".6"/><path d="M2.500 6.500L8.500 4L14.500 6.500V11L8.500 13.500L2.500 11Z" fill="#5aa2e6" stroke="#2f6fb8" stroke-width=".6"/><path d="M8.500 4V13.500" stroke="#2f6fb8" stroke-width=".6"/><path d="M2.500 6.500L8.500 9L14.500 6.500" fill="none" stroke="#cfe6fb" stroke-width=".7"/><circle cx="12.500" cy="11.800" r="3.300" fill="#2fa53c" stroke="#e9f7ea" stroke-width=".6"/><path d="M10.800 11.800L12.100 13.100L14.300 10.500" fill="none" stroke="#fff" stroke-width="1.100"/></svg><div style="left:1162px;top:1001px;width:16px;height:16px;background:#fff;border:1px solid #111;border-top:3px solid #e01b22"></div><svg style="left:1165px;top:1005px;" width="10" height="10" viewBox="0 0 10 10" preserveAspectRatio="none"><path d="M5 .8L9.200 5L5 9.200L.8 5Z" fill="#fff" stroke="#111" stroke-width="1.200"/></svg><svg style="left:1180px;top:1000px;" width="17" height="18" viewBox="0 0 17 18" preserveAspectRatio="none"><path d="M1 9L6 5.500H15L11 9Z" fill="#d9d2b0" stroke="#6b6448" stroke-width=".7"/><path d="M1 9H11V15H1Z" fill="#c9c09a" stroke="#6b6448" stroke-width=".7"/><path d="M11 9L15 5.500V11.500L11 15Z" fill="#a89f78" stroke="#6b6448" stroke-width=".7"/><path d="M5 7L7 1.500H13L11.500 7Z" fill="#fff" stroke="#888" stroke-width=".6"/><rect x="6.500" y="6" width="2.200" height="9" fill="#e01b22"/><circle cx="7.600" cy="3.800" r="1.500" fill="#e01b22"/></svg><svg style="left:1198px;top:1001px;" width="17" height="17" viewBox="0 0 17 17" preserveAspectRatio="none"><path d="M1 9L9 2L15 6L7 14Z" fill="#d9dde6" stroke="#7a8298" stroke-width=".8"/><path d="M4 8.500L9 4M6 10L11 5.500M8 11.500L13 7" stroke="#9aa3b8" stroke-width="1"/><ellipse cx="5" cy="13" rx="4.500" ry="2.500" fill="#c4c9d6" stroke="#7a8298" stroke-width=".7"/><circle cx="12.500" cy="10.500" r="1.800" fill="#f1c27d"/><path d="M9.500 16.500C9.500 13.500 15.500 13.500 15.500 16.500Z" fill="#2f6fe0"/></svg>
</body></html>
